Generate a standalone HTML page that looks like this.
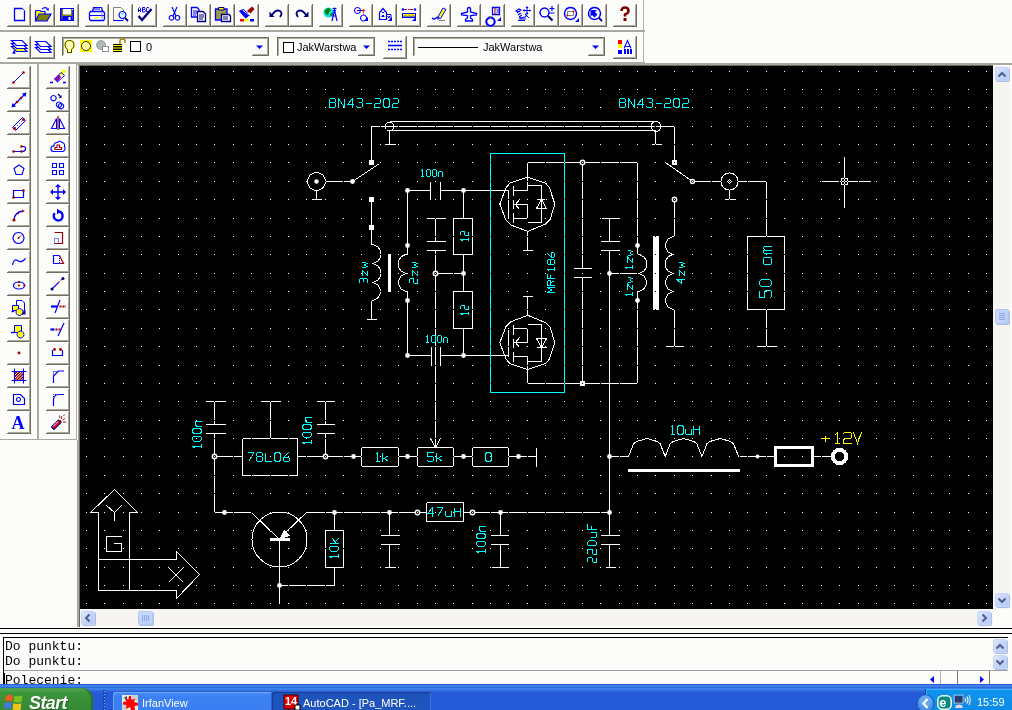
<!DOCTYPE html><html><head><meta charset="utf-8"><style>
*{margin:0;padding:0;box-sizing:border-box}
html,body{width:1012px;height:710px;overflow:hidden;background:#fcfdfb;font-family:"Liberation Sans",sans-serif;position:relative}
.a{position:absolute}
svg{position:absolute;overflow:visible}
</style></head><body><div class="a" style="left:0px;top:30px;width:645px;height:2px;background:#a9a8a3;"></div><div class="a" style="left:0px;top:62px;width:645px;height:2px;background:#a9a8a3;"></div><div class="a" style="left:643px;top:0px;width:1px;height:30px;background:#b4b3ae;"></div><div class="a" style="left:643px;top:32px;width:1px;height:30px;background:#b4b3ae;"></div><div class="a" style="left:30px;top:4px;width:1px;height:23px;background:#716f64;"></div><div class="a" style="left:7px;top:26px;width:24px;height:1px;background:#716f64;"></div><div class="a" style="left:29px;top:5px;width:1px;height:21px;background:#aca899;"></div><div class="a" style="left:8px;top:25px;width:22px;height:1px;background:#aca899;"></div><div class="a" style="left:54px;top:4px;width:1px;height:23px;background:#716f64;"></div><div class="a" style="left:31px;top:26px;width:24px;height:1px;background:#716f64;"></div><div class="a" style="left:53px;top:5px;width:1px;height:21px;background:#aca899;"></div><div class="a" style="left:32px;top:25px;width:22px;height:1px;background:#aca899;"></div><div class="a" style="left:78px;top:4px;width:1px;height:23px;background:#716f64;"></div><div class="a" style="left:55px;top:26px;width:24px;height:1px;background:#716f64;"></div><div class="a" style="left:77px;top:5px;width:1px;height:21px;background:#aca899;"></div><div class="a" style="left:56px;top:25px;width:22px;height:1px;background:#aca899;"></div><div class="a" style="left:108px;top:4px;width:1px;height:23px;background:#716f64;"></div><div class="a" style="left:85px;top:26px;width:24px;height:1px;background:#716f64;"></div><div class="a" style="left:107px;top:5px;width:1px;height:21px;background:#aca899;"></div><div class="a" style="left:86px;top:25px;width:22px;height:1px;background:#aca899;"></div><div class="a" style="left:132px;top:4px;width:1px;height:23px;background:#716f64;"></div><div class="a" style="left:109px;top:26px;width:24px;height:1px;background:#716f64;"></div><div class="a" style="left:131px;top:5px;width:1px;height:21px;background:#aca899;"></div><div class="a" style="left:110px;top:25px;width:22px;height:1px;background:#aca899;"></div><div class="a" style="left:156px;top:4px;width:1px;height:23px;background:#716f64;"></div><div class="a" style="left:133px;top:26px;width:24px;height:1px;background:#716f64;"></div><div class="a" style="left:155px;top:5px;width:1px;height:21px;background:#aca899;"></div><div class="a" style="left:134px;top:25px;width:22px;height:1px;background:#aca899;"></div><div class="a" style="left:186px;top:4px;width:1px;height:23px;background:#716f64;"></div><div class="a" style="left:163px;top:26px;width:24px;height:1px;background:#716f64;"></div><div class="a" style="left:185px;top:5px;width:1px;height:21px;background:#aca899;"></div><div class="a" style="left:164px;top:25px;width:22px;height:1px;background:#aca899;"></div><div class="a" style="left:210px;top:4px;width:1px;height:23px;background:#716f64;"></div><div class="a" style="left:187px;top:26px;width:24px;height:1px;background:#716f64;"></div><div class="a" style="left:209px;top:5px;width:1px;height:21px;background:#aca899;"></div><div class="a" style="left:188px;top:25px;width:22px;height:1px;background:#aca899;"></div><div class="a" style="left:234px;top:4px;width:1px;height:23px;background:#716f64;"></div><div class="a" style="left:211px;top:26px;width:24px;height:1px;background:#716f64;"></div><div class="a" style="left:233px;top:5px;width:1px;height:21px;background:#aca899;"></div><div class="a" style="left:212px;top:25px;width:22px;height:1px;background:#aca899;"></div><div class="a" style="left:258px;top:4px;width:1px;height:23px;background:#716f64;"></div><div class="a" style="left:235px;top:26px;width:24px;height:1px;background:#716f64;"></div><div class="a" style="left:257px;top:5px;width:1px;height:21px;background:#aca899;"></div><div class="a" style="left:236px;top:25px;width:22px;height:1px;background:#aca899;"></div><div class="a" style="left:288px;top:4px;width:1px;height:23px;background:#716f64;"></div><div class="a" style="left:265px;top:26px;width:24px;height:1px;background:#716f64;"></div><div class="a" style="left:287px;top:5px;width:1px;height:21px;background:#aca899;"></div><div class="a" style="left:266px;top:25px;width:22px;height:1px;background:#aca899;"></div><div class="a" style="left:312px;top:4px;width:1px;height:23px;background:#716f64;"></div><div class="a" style="left:289px;top:26px;width:24px;height:1px;background:#716f64;"></div><div class="a" style="left:311px;top:5px;width:1px;height:21px;background:#aca899;"></div><div class="a" style="left:290px;top:25px;width:22px;height:1px;background:#aca899;"></div><div class="a" style="left:342px;top:4px;width:1px;height:23px;background:#716f64;"></div><div class="a" style="left:319px;top:26px;width:24px;height:1px;background:#716f64;"></div><div class="a" style="left:341px;top:5px;width:1px;height:21px;background:#aca899;"></div><div class="a" style="left:320px;top:25px;width:22px;height:1px;background:#aca899;"></div><div class="a" style="left:372px;top:4px;width:1px;height:23px;background:#716f64;"></div><div class="a" style="left:349px;top:26px;width:24px;height:1px;background:#716f64;"></div><div class="a" style="left:371px;top:5px;width:1px;height:21px;background:#aca899;"></div><div class="a" style="left:350px;top:25px;width:22px;height:1px;background:#aca899;"></div><div class="a" style="left:396px;top:4px;width:1px;height:23px;background:#716f64;"></div><div class="a" style="left:373px;top:26px;width:24px;height:1px;background:#716f64;"></div><div class="a" style="left:395px;top:5px;width:1px;height:21px;background:#aca899;"></div><div class="a" style="left:374px;top:25px;width:22px;height:1px;background:#aca899;"></div><div class="a" style="left:420px;top:4px;width:1px;height:23px;background:#716f64;"></div><div class="a" style="left:397px;top:26px;width:24px;height:1px;background:#716f64;"></div><div class="a" style="left:419px;top:5px;width:1px;height:21px;background:#aca899;"></div><div class="a" style="left:398px;top:25px;width:22px;height:1px;background:#aca899;"></div><div class="a" style="left:450px;top:4px;width:1px;height:23px;background:#716f64;"></div><div class="a" style="left:427px;top:26px;width:24px;height:1px;background:#716f64;"></div><div class="a" style="left:449px;top:5px;width:1px;height:21px;background:#aca899;"></div><div class="a" style="left:428px;top:25px;width:22px;height:1px;background:#aca899;"></div><div class="a" style="left:480px;top:4px;width:1px;height:23px;background:#716f64;"></div><div class="a" style="left:457px;top:26px;width:24px;height:1px;background:#716f64;"></div><div class="a" style="left:479px;top:5px;width:1px;height:21px;background:#aca899;"></div><div class="a" style="left:458px;top:25px;width:22px;height:1px;background:#aca899;"></div><div class="a" style="left:504px;top:4px;width:1px;height:23px;background:#716f64;"></div><div class="a" style="left:481px;top:26px;width:24px;height:1px;background:#716f64;"></div><div class="a" style="left:503px;top:5px;width:1px;height:21px;background:#aca899;"></div><div class="a" style="left:482px;top:25px;width:22px;height:1px;background:#aca899;"></div><div class="a" style="left:534px;top:4px;width:1px;height:23px;background:#716f64;"></div><div class="a" style="left:511px;top:26px;width:24px;height:1px;background:#716f64;"></div><div class="a" style="left:533px;top:5px;width:1px;height:21px;background:#aca899;"></div><div class="a" style="left:512px;top:25px;width:22px;height:1px;background:#aca899;"></div><div class="a" style="left:558px;top:4px;width:1px;height:23px;background:#716f64;"></div><div class="a" style="left:535px;top:26px;width:24px;height:1px;background:#716f64;"></div><div class="a" style="left:557px;top:5px;width:1px;height:21px;background:#aca899;"></div><div class="a" style="left:536px;top:25px;width:22px;height:1px;background:#aca899;"></div><div class="a" style="left:582px;top:4px;width:1px;height:23px;background:#716f64;"></div><div class="a" style="left:559px;top:26px;width:24px;height:1px;background:#716f64;"></div><div class="a" style="left:581px;top:5px;width:1px;height:21px;background:#aca899;"></div><div class="a" style="left:560px;top:25px;width:22px;height:1px;background:#aca899;"></div><div class="a" style="left:606px;top:4px;width:1px;height:23px;background:#716f64;"></div><div class="a" style="left:583px;top:26px;width:24px;height:1px;background:#716f64;"></div><div class="a" style="left:605px;top:5px;width:1px;height:21px;background:#aca899;"></div><div class="a" style="left:584px;top:25px;width:22px;height:1px;background:#aca899;"></div><div class="a" style="left:636px;top:4px;width:1px;height:23px;background:#716f64;"></div><div class="a" style="left:613px;top:26px;width:24px;height:1px;background:#716f64;"></div><div class="a" style="left:635px;top:5px;width:1px;height:21px;background:#aca899;"></div><div class="a" style="left:614px;top:25px;width:22px;height:1px;background:#aca899;"></div><div class="a" style="left:30px;top:36px;width:1px;height:23px;background:#716f64;"></div><div class="a" style="left:7px;top:58px;width:24px;height:1px;background:#716f64;"></div><div class="a" style="left:29px;top:37px;width:1px;height:21px;background:#aca899;"></div><div class="a" style="left:8px;top:57px;width:22px;height:1px;background:#aca899;"></div><div class="a" style="left:54px;top:36px;width:1px;height:23px;background:#716f64;"></div><div class="a" style="left:31px;top:58px;width:24px;height:1px;background:#716f64;"></div><div class="a" style="left:53px;top:37px;width:1px;height:21px;background:#aca899;"></div><div class="a" style="left:32px;top:57px;width:22px;height:1px;background:#aca899;"></div><div class="a" style="left:406px;top:36px;width:1px;height:23px;background:#716f64;"></div><div class="a" style="left:383px;top:58px;width:24px;height:1px;background:#716f64;"></div><div class="a" style="left:405px;top:37px;width:1px;height:21px;background:#aca899;"></div><div class="a" style="left:384px;top:57px;width:22px;height:1px;background:#aca899;"></div><div class="a" style="left:636px;top:36px;width:1px;height:23px;background:#716f64;"></div><div class="a" style="left:613px;top:58px;width:24px;height:1px;background:#716f64;"></div><div class="a" style="left:635px;top:37px;width:1px;height:21px;background:#aca899;"></div><div class="a" style="left:614px;top:57px;width:22px;height:1px;background:#aca899;"></div><div class="a" style="left:62px;top:37px;width:207px;height:1px;background:#716f64;"></div><div class="a" style="left:62px;top:37px;width:1px;height:19px;background:#716f64;"></div><div class="a" style="left:63px;top:38px;width:205px;height:1px;background:#aca899;"></div><div class="a" style="left:63px;top:38px;width:1px;height:17px;background:#aca899;"></div><div class="a" style="left:277px;top:37px;width:98px;height:1px;background:#716f64;"></div><div class="a" style="left:277px;top:37px;width:1px;height:19px;background:#716f64;"></div><div class="a" style="left:278px;top:38px;width:96px;height:1px;background:#aca899;"></div><div class="a" style="left:278px;top:38px;width:1px;height:17px;background:#aca899;"></div><div class="a" style="left:413px;top:37px;width:192px;height:1px;background:#716f64;"></div><div class="a" style="left:413px;top:37px;width:1px;height:19px;background:#716f64;"></div><div class="a" style="left:414px;top:38px;width:190px;height:1px;background:#aca899;"></div><div class="a" style="left:414px;top:38px;width:1px;height:17px;background:#aca899;"></div><div class="a" style="left:37px;top:64px;width:2px;height:375px;background:#a9a8a3;"></div><div class="a" style="left:76px;top:64px;width:1px;height:375px;background:#a9a8a3;"></div><div class="a" style="left:77px;top:440px;width:1px;height:187px;background:#a9a8a3;"></div><div class="a" style="left:0px;top:439px;width:77px;height:1px;background:#a9a8a3;"></div><div class="a" style="left:30px;top:66px;width:1px;height:23px;background:#716f64;"></div><div class="a" style="left:7px;top:88px;width:24px;height:1px;background:#716f64;"></div><div class="a" style="left:29px;top:67px;width:1px;height:21px;background:#aca899;"></div><div class="a" style="left:8px;top:87px;width:22px;height:1px;background:#aca899;"></div><div class="a" style="left:69px;top:66px;width:1px;height:23px;background:#716f64;"></div><div class="a" style="left:46px;top:88px;width:24px;height:1px;background:#716f64;"></div><div class="a" style="left:68px;top:67px;width:1px;height:21px;background:#aca899;"></div><div class="a" style="left:47px;top:87px;width:22px;height:1px;background:#aca899;"></div><div class="a" style="left:30px;top:89px;width:1px;height:23px;background:#716f64;"></div><div class="a" style="left:7px;top:111px;width:24px;height:1px;background:#716f64;"></div><div class="a" style="left:29px;top:90px;width:1px;height:21px;background:#aca899;"></div><div class="a" style="left:8px;top:110px;width:22px;height:1px;background:#aca899;"></div><div class="a" style="left:69px;top:89px;width:1px;height:23px;background:#716f64;"></div><div class="a" style="left:46px;top:111px;width:24px;height:1px;background:#716f64;"></div><div class="a" style="left:68px;top:90px;width:1px;height:21px;background:#aca899;"></div><div class="a" style="left:47px;top:110px;width:22px;height:1px;background:#aca899;"></div><div class="a" style="left:30px;top:112px;width:1px;height:23px;background:#716f64;"></div><div class="a" style="left:7px;top:134px;width:24px;height:1px;background:#716f64;"></div><div class="a" style="left:29px;top:113px;width:1px;height:21px;background:#aca899;"></div><div class="a" style="left:8px;top:133px;width:22px;height:1px;background:#aca899;"></div><div class="a" style="left:69px;top:112px;width:1px;height:23px;background:#716f64;"></div><div class="a" style="left:46px;top:134px;width:24px;height:1px;background:#716f64;"></div><div class="a" style="left:68px;top:113px;width:1px;height:21px;background:#aca899;"></div><div class="a" style="left:47px;top:133px;width:22px;height:1px;background:#aca899;"></div><div class="a" style="left:30px;top:135px;width:1px;height:23px;background:#716f64;"></div><div class="a" style="left:7px;top:157px;width:24px;height:1px;background:#716f64;"></div><div class="a" style="left:29px;top:136px;width:1px;height:21px;background:#aca899;"></div><div class="a" style="left:8px;top:156px;width:22px;height:1px;background:#aca899;"></div><div class="a" style="left:69px;top:135px;width:1px;height:23px;background:#716f64;"></div><div class="a" style="left:46px;top:157px;width:24px;height:1px;background:#716f64;"></div><div class="a" style="left:68px;top:136px;width:1px;height:21px;background:#aca899;"></div><div class="a" style="left:47px;top:156px;width:22px;height:1px;background:#aca899;"></div><div class="a" style="left:30px;top:158px;width:1px;height:23px;background:#716f64;"></div><div class="a" style="left:7px;top:180px;width:24px;height:1px;background:#716f64;"></div><div class="a" style="left:29px;top:159px;width:1px;height:21px;background:#aca899;"></div><div class="a" style="left:8px;top:179px;width:22px;height:1px;background:#aca899;"></div><div class="a" style="left:69px;top:158px;width:1px;height:23px;background:#716f64;"></div><div class="a" style="left:46px;top:180px;width:24px;height:1px;background:#716f64;"></div><div class="a" style="left:68px;top:159px;width:1px;height:21px;background:#aca899;"></div><div class="a" style="left:47px;top:179px;width:22px;height:1px;background:#aca899;"></div><div class="a" style="left:30px;top:181px;width:1px;height:23px;background:#716f64;"></div><div class="a" style="left:7px;top:203px;width:24px;height:1px;background:#716f64;"></div><div class="a" style="left:29px;top:182px;width:1px;height:21px;background:#aca899;"></div><div class="a" style="left:8px;top:202px;width:22px;height:1px;background:#aca899;"></div><div class="a" style="left:69px;top:181px;width:1px;height:23px;background:#716f64;"></div><div class="a" style="left:46px;top:203px;width:24px;height:1px;background:#716f64;"></div><div class="a" style="left:68px;top:182px;width:1px;height:21px;background:#aca899;"></div><div class="a" style="left:47px;top:202px;width:22px;height:1px;background:#aca899;"></div><div class="a" style="left:30px;top:204px;width:1px;height:23px;background:#716f64;"></div><div class="a" style="left:7px;top:226px;width:24px;height:1px;background:#716f64;"></div><div class="a" style="left:29px;top:205px;width:1px;height:21px;background:#aca899;"></div><div class="a" style="left:8px;top:225px;width:22px;height:1px;background:#aca899;"></div><div class="a" style="left:69px;top:204px;width:1px;height:23px;background:#716f64;"></div><div class="a" style="left:46px;top:226px;width:24px;height:1px;background:#716f64;"></div><div class="a" style="left:68px;top:205px;width:1px;height:21px;background:#aca899;"></div><div class="a" style="left:47px;top:225px;width:22px;height:1px;background:#aca899;"></div><div class="a" style="left:30px;top:227px;width:1px;height:23px;background:#716f64;"></div><div class="a" style="left:7px;top:249px;width:24px;height:1px;background:#716f64;"></div><div class="a" style="left:29px;top:228px;width:1px;height:21px;background:#aca899;"></div><div class="a" style="left:8px;top:248px;width:22px;height:1px;background:#aca899;"></div><div class="a" style="left:69px;top:227px;width:1px;height:23px;background:#716f64;"></div><div class="a" style="left:46px;top:249px;width:24px;height:1px;background:#716f64;"></div><div class="a" style="left:68px;top:228px;width:1px;height:21px;background:#aca899;"></div><div class="a" style="left:47px;top:248px;width:22px;height:1px;background:#aca899;"></div><div class="a" style="left:30px;top:250px;width:1px;height:23px;background:#716f64;"></div><div class="a" style="left:7px;top:272px;width:24px;height:1px;background:#716f64;"></div><div class="a" style="left:29px;top:251px;width:1px;height:21px;background:#aca899;"></div><div class="a" style="left:8px;top:271px;width:22px;height:1px;background:#aca899;"></div><div class="a" style="left:69px;top:250px;width:1px;height:23px;background:#716f64;"></div><div class="a" style="left:46px;top:272px;width:24px;height:1px;background:#716f64;"></div><div class="a" style="left:68px;top:251px;width:1px;height:21px;background:#aca899;"></div><div class="a" style="left:47px;top:271px;width:22px;height:1px;background:#aca899;"></div><div class="a" style="left:30px;top:273px;width:1px;height:23px;background:#716f64;"></div><div class="a" style="left:7px;top:295px;width:24px;height:1px;background:#716f64;"></div><div class="a" style="left:29px;top:274px;width:1px;height:21px;background:#aca899;"></div><div class="a" style="left:8px;top:294px;width:22px;height:1px;background:#aca899;"></div><div class="a" style="left:69px;top:273px;width:1px;height:23px;background:#716f64;"></div><div class="a" style="left:46px;top:295px;width:24px;height:1px;background:#716f64;"></div><div class="a" style="left:68px;top:274px;width:1px;height:21px;background:#aca899;"></div><div class="a" style="left:47px;top:294px;width:22px;height:1px;background:#aca899;"></div><div class="a" style="left:30px;top:296px;width:1px;height:23px;background:#716f64;"></div><div class="a" style="left:7px;top:318px;width:24px;height:1px;background:#716f64;"></div><div class="a" style="left:29px;top:297px;width:1px;height:21px;background:#aca899;"></div><div class="a" style="left:8px;top:317px;width:22px;height:1px;background:#aca899;"></div><div class="a" style="left:69px;top:296px;width:1px;height:23px;background:#716f64;"></div><div class="a" style="left:46px;top:318px;width:24px;height:1px;background:#716f64;"></div><div class="a" style="left:68px;top:297px;width:1px;height:21px;background:#aca899;"></div><div class="a" style="left:47px;top:317px;width:22px;height:1px;background:#aca899;"></div><div class="a" style="left:30px;top:319px;width:1px;height:23px;background:#716f64;"></div><div class="a" style="left:7px;top:341px;width:24px;height:1px;background:#716f64;"></div><div class="a" style="left:29px;top:320px;width:1px;height:21px;background:#aca899;"></div><div class="a" style="left:8px;top:340px;width:22px;height:1px;background:#aca899;"></div><div class="a" style="left:69px;top:319px;width:1px;height:23px;background:#716f64;"></div><div class="a" style="left:46px;top:341px;width:24px;height:1px;background:#716f64;"></div><div class="a" style="left:68px;top:320px;width:1px;height:21px;background:#aca899;"></div><div class="a" style="left:47px;top:340px;width:22px;height:1px;background:#aca899;"></div><div class="a" style="left:30px;top:342px;width:1px;height:23px;background:#716f64;"></div><div class="a" style="left:7px;top:364px;width:24px;height:1px;background:#716f64;"></div><div class="a" style="left:29px;top:343px;width:1px;height:21px;background:#aca899;"></div><div class="a" style="left:8px;top:363px;width:22px;height:1px;background:#aca899;"></div><div class="a" style="left:69px;top:342px;width:1px;height:23px;background:#716f64;"></div><div class="a" style="left:46px;top:364px;width:24px;height:1px;background:#716f64;"></div><div class="a" style="left:68px;top:343px;width:1px;height:21px;background:#aca899;"></div><div class="a" style="left:47px;top:363px;width:22px;height:1px;background:#aca899;"></div><div class="a" style="left:30px;top:365px;width:1px;height:23px;background:#716f64;"></div><div class="a" style="left:7px;top:387px;width:24px;height:1px;background:#716f64;"></div><div class="a" style="left:29px;top:366px;width:1px;height:21px;background:#aca899;"></div><div class="a" style="left:8px;top:386px;width:22px;height:1px;background:#aca899;"></div><div class="a" style="left:69px;top:365px;width:1px;height:23px;background:#716f64;"></div><div class="a" style="left:46px;top:387px;width:24px;height:1px;background:#716f64;"></div><div class="a" style="left:68px;top:366px;width:1px;height:21px;background:#aca899;"></div><div class="a" style="left:47px;top:386px;width:22px;height:1px;background:#aca899;"></div><div class="a" style="left:30px;top:388px;width:1px;height:23px;background:#716f64;"></div><div class="a" style="left:7px;top:410px;width:24px;height:1px;background:#716f64;"></div><div class="a" style="left:29px;top:389px;width:1px;height:21px;background:#aca899;"></div><div class="a" style="left:8px;top:409px;width:22px;height:1px;background:#aca899;"></div><div class="a" style="left:69px;top:388px;width:1px;height:23px;background:#716f64;"></div><div class="a" style="left:46px;top:410px;width:24px;height:1px;background:#716f64;"></div><div class="a" style="left:68px;top:389px;width:1px;height:21px;background:#aca899;"></div><div class="a" style="left:47px;top:409px;width:22px;height:1px;background:#aca899;"></div><div class="a" style="left:30px;top:411px;width:1px;height:23px;background:#716f64;"></div><div class="a" style="left:7px;top:433px;width:24px;height:1px;background:#716f64;"></div><div class="a" style="left:29px;top:412px;width:1px;height:21px;background:#aca899;"></div><div class="a" style="left:8px;top:432px;width:22px;height:1px;background:#aca899;"></div><div class="a" style="left:69px;top:411px;width:1px;height:23px;background:#716f64;"></div><div class="a" style="left:46px;top:433px;width:24px;height:1px;background:#716f64;"></div><div class="a" style="left:68px;top:412px;width:1px;height:21px;background:#aca899;"></div><div class="a" style="left:47px;top:432px;width:22px;height:1px;background:#aca899;"></div><svg class="a" style="left:11px;top:6px" width="16" height="16" viewBox="0 0 16 16"><path d="M3.5 2.5H11L13.5 5V14.5H3.5Z" stroke="#0000ff" stroke-width="1.3" fill="none" /><path d="M11 2.5V5H13.5" fill="#fff"/></svg><svg class="a" style="left:35px;top:6px" width="16" height="16" viewBox="0 0 16 16"><path d="M0.5 4.5H5L6 5.5H10V8H4L0.5 15Z" fill="#ffff00"/><path d="M0.5 4.5H5L6 5.5H10V8" stroke="#0000ff" stroke-width="1.2" fill="none" /><path d="M0.5 4.5V15" stroke="#0000ff" stroke-width="1.2" fill="none" /><path d="M0.5 15L4 8H16L12 15Z" fill="#808000"/><path d="M0.5 15L4 8H16L12 15Z" stroke="#0000ff" stroke-width="1.2" fill="none" /><path d="M7 3Q9.5 0.5 12.5 2.5" stroke="#0000ff" stroke-width="1.2" fill="none" /><path d="M11 3.5L14 2L13.5 5Z" fill="#0000ff"/></svg><svg class="a" style="left:59px;top:6px" width="16" height="16" viewBox="0 0 16 16"><path d="M1 2H15V15H1Z" fill="#0000ff"/><path d="M2.5 3H13.5V13.5H2.5Z" fill="#808000"/><path d="M4 3H12V8.5H4Z" fill="#fff"/><path d="M3.5 10H13V15H3.5Z" fill="#0000ff"/><path d="M9.5 11H11.5V14H9.5Z" fill="#fff"/><path d="M13 3H14V4H13Z" fill="#fff"/></svg><svg class="a" style="left:89px;top:6px" width="16" height="16" viewBox="0 0 16 16"><path d="M4.5 1.5H12.5L13.5 5.5H3.5Z" stroke="#0000ff" stroke-width="1.2" fill="none" /><path d="M5 3H11" stroke="#0000ff" stroke-width="1" fill="none" /><path d="M0.5 6H15.5V14H1.5Z" fill="#fff"/><path d="M1.5 5.5H14.5L15.5 7V13L14.5 14.5H1.5L0.5 13V7Z" stroke="#0000ff" stroke-width="1.3" fill="none" /><path d="M1 9.5H15" stroke="#0000ff" stroke-width="1" fill="none" /><path d="M6 11H10V12.5H6Z" fill="#ffff00"/><path d="M13 7V13" stroke="#8080ff" stroke-width="1" fill="none" /></svg><svg class="a" style="left:113px;top:6px" width="16" height="16" viewBox="0 0 16 16"><path d="M0.5 1.5H8L10.5 4V14.5H0.5Z" stroke="#808080" stroke-width="1" fill="none" /><path d="M0.5 14.5H10" stroke="#0000ff" stroke-width="1.2" fill="none" /><path d="M9.5 5.5A3.5 3.5 0 1 1 9.49 5.5Z" fill="#e0ffff"/><path d="M9.5 5.5A3.5 3.5 0 1 1 9.49 5.5Z" stroke="#0000ff" stroke-width="1.2" fill="none" /><path d="M9 8.5Q9.5 7.5 10.5 7.5" stroke="#00c0ff" stroke-width="1.2" fill="none" /><path d="M12 12L15 15" stroke="#000080" stroke-width="2" fill="none" /></svg><svg class="a" style="left:137px;top:6px" width="16" height="16" viewBox="0 0 16 16"><path d="M1.5 6V2.5L2.5 1.5L3.5 2.5V6M1.5 4.5H3.5" stroke="#0000ff" stroke-width="1" fill="none" /><path d="M5.5 6V1.5H7.5L8 2.5L7.5 3.5H5.5M7.5 3.5L8.5 4.5L7.5 6H5.5" stroke="#0000ff" stroke-width="1" fill="none" /><path d="M12 2L11 1.5H10L9.5 2.5V5L10 6H11.5" stroke="#0000ff" stroke-width="1" fill="none" /><path d="M1.5 10L5 14L14.5 3" stroke="#000080" stroke-width="2.4" fill="none" /></svg><svg class="a" style="left:167px;top:6px" width="16" height="16" viewBox="0 0 16 16"><path d="M5 1L9 10M10 1L6 10" stroke="#0000ff" stroke-width="1.2" fill="none" /><path d="M4.5 9.5A2.3 2.3 0 1 1 4.49 9.5Z" fill="#fff"/><path d="M4.5 9.5A2.3 2.3 0 1 1 4.49 9.5Z" stroke="#0000ff" stroke-width="1.2" fill="none" /><path d="M10.5 9.5A2.3 2.3 0 1 1 10.49 9.5Z" stroke="#0000ff" stroke-width="1.2" fill="none" /></svg><svg class="a" style="left:191px;top:6px" width="16" height="16" viewBox="0 0 16 16"><path d="M0.5 1.5H6L8 3.5V11H0.5Z" fill="#fff"/><path d="M0.5 1.5H6L8 3.5V11H0.5Z" stroke="#0000ff" stroke-width="1.3" fill="none" /><path d="M2 5H6M2 7H6M2 9H5" stroke="#0000ff" stroke-width="1" fill="none" /><path d="M6.5 5.5H12L14.5 8V15.5H6.5Z" fill="#fff"/><path d="M6.5 5.5H12L14.5 8V15.5H6.5Z" stroke="#000080" stroke-width="1.3" fill="none" /><path d="M8 9H13M8 11H13M8 13H12" stroke="#000080" stroke-width="1" fill="none" /></svg><svg class="a" style="left:215px;top:6px" width="16" height="16" viewBox="0 0 16 16"><path d="M0.5 3H12V14H0.5Z" fill="#9c9c50"/><path d="M0.5 3H12V14H0.5Z" stroke="#0000ff" stroke-width="1.3" fill="none" /><path d="M3.5 1.5H9V4H3.5Z" fill="#ffff00"/><path d="M3.5 1.5H9V4H3.5Z" stroke="#000080" stroke-width="1" fill="none" /><path d="M6.5 8.5H14L15.5 10V15.5H6.5Z" fill="#fff"/><path d="M6.5 8.5H14L15.5 10V15.5H6.5Z" stroke="#000080" stroke-width="1.3" fill="none" /><path d="M8 11H13M8 13H13" stroke="#000080" stroke-width="1" fill="none" /></svg><svg class="a" style="left:239px;top:6px" width="16" height="16" viewBox="0 0 16 16"><path d="M0.5 5L4.5 3.5L10 9.5L6.5 12Z" fill="#0000ff"/><path d="M3.5 4.5L9.5 9L10.5 8L5 3.5Z" fill="#fff"/><path d="M0.5 5L4.5 3.5L10.5 9L6.5 12Z" stroke="#0000ff" stroke-width="1" fill="none" /><path d="M8 5L13 0.5L15.5 3L11 8Z" fill="#a00000"/><path d="M10 6L11.5 7.5L10 9L8.5 7.5Z" fill="#fff"/><path d="M1 13H5V15.5H1Z" fill="#ff0000"/><path d="M6 13H10V15.5H6Z" fill="#ffff00"/><path d="M11 13H15V15.5H11Z" fill="#0000ff"/></svg><svg class="a" style="left:269px;top:6px" width="16" height="16" viewBox="0 0 16 16"><path d="M3 9Q7 3 11 5Q14 7 11 11" stroke="#000080" stroke-width="1.8" fill="none" /><path d="M0.5 5.5L0.5 11L5.5 11Z" fill="#000080"/></svg><svg class="a" style="left:293px;top:6px" width="16" height="16" viewBox="0 0 16 16"><path d="M13 9Q9 3 5 5Q2 7 5 11" stroke="#000080" stroke-width="1.8" fill="none" /><path d="M15.5 5.5L15.5 11L10.5 11Z" fill="#000080"/></svg><svg class="a" style="left:323px;top:6px" width="16" height="16" viewBox="0 0 16 16"><path d="M5.5 1.5A5 5 0 1 1 5.49 1.5Z" fill="#00e0e0"/><path d="M1.5 5Q3 2 6 2L8 4L6 6L5 9L2.5 8Z" fill="#008000"/><path d="M7 8L10 6.5L10 9L8 11Z" fill="#008000"/><path d="M11.5 1.5V4M9.5 2.5H13.5M10 4.5H13M9 15L11.5 4L14 15M10 10H13" stroke="#0000ff" stroke-width="1.2" fill="none" /></svg><svg class="a" style="left:353px;top:6px" width="16" height="16" viewBox="0 0 16 16"><path d="M4.5 1.5A3 3 0 1 1 4.49 1.5Z" stroke="#0000ff" stroke-width="1.1" fill="none" /><path d="M4.5 4.5H10" stroke="#0000ff" stroke-width="1" fill="none" /><circle cx="10.5" cy="4.5" r="1.2" fill="#e00000"/><path d="M10.5 5.5V9" stroke="#e00000" stroke-width="1" fill="none" stroke-dasharray="1 1"/><path d="M10.5 9A3 3 0 1 1 10.49 9Z" stroke="#0000ff" stroke-width="1.1" fill="none" /><circle cx="4.5" cy="4.5" r="0.8" fill="#e00000"/><path d="M11 15L15 15L15 11Z" fill="#0000ff"/></svg><svg class="a" style="left:377px;top:6px" width="16" height="16" viewBox="0 0 16 16"><path d="M2.5 6.5L6 2.5L9.5 6.5V13.5H2.5Z" stroke="#0000ff" stroke-width="1.2" fill="none" /><path d="M4.5 5.5L6 7L7.5 5.5" stroke="#0000ff" stroke-width="1" fill="none" /><path d="M5 9H7V11H5Z" fill="#0000ff"/><path d="M4 10H8V10.5H4Z" fill="#0000ff"/><path d="M9.5 8.5H14V14" stroke="#0000ff" stroke-width="1" fill="none" /><path d="M10.5 10L13 12.5M13 10L10.5 12.5" stroke="#0000ff" stroke-width="1" fill="none" /><path d="M11 15L15 15L15 11Z" fill="#0000ff"/></svg><svg class="a" style="left:401px;top:6px" width="16" height="16" viewBox="0 0 16 16"><path d="M1 3.5H15" stroke="#0000ff" stroke-width="1.2" fill="none" stroke-dasharray="1.5 1.5"/><circle cx="2" cy="3.5" r="1.3" fill="#0000ff"/><circle cx="14" cy="3.5" r="1.3" fill="#0000ff"/><path d="M3 3.5H13" stroke="#e00000" stroke-width="1" fill="none" stroke-dasharray="1 1"/><path d="M1 7H15V12H1Z" fill="#0000ff"/><path d="M2 8H14V10.5H2Z" fill="#ffff00"/><path d="M2 10L4 8.5L6 10L8 8.5L10 10L12 8.5L14 10Z" fill="#c0a000"/><path d="M11 15L15 15L15 11Z" fill="#0000ff"/></svg><svg class="a" style="left:431px;top:6px" width="16" height="16" viewBox="0 0 16 16"><path d="M7 11L12 2L15 3.5L9.5 12.5Z" fill="#ffff00"/><path d="M7 11L12 2L15 3.5L9.5 12.5Z" stroke="#0000ff" stroke-width="1" fill="none" /><path d="M1 12Q3 14 5 12Q7 10 7 13L8.5 12.5" stroke="#0000ff" stroke-width="1.2" fill="none" /><path d="M8 14.5H14" stroke="#808080" stroke-width="1" fill="none" /></svg><svg class="a" style="left:461px;top:6px" width="16" height="16" viewBox="0 0 16 16"><path d="M6.5 2.5Q8 0.5 9.5 2.5V6L15.5 7.5V9L9.5 9.5V12L11.5 13.5V15H4.5V13.5L6.5 12V9.5L0.5 9V7.5L6.5 6Z" stroke="#0000ff" stroke-width="1.3" fill="none" /></svg><svg class="a" style="left:485px;top:6px" width="16" height="16" viewBox="0 0 16 16"><path d="M5.5 11A5 5 0 1 1 5.49 11Z" fill="#fff"/><path d="M5.5 11.5A4.2 4.2 0 1 1 5.49 11.5Z" stroke="#0000ff" stroke-width="2" fill="none" /><path d="M3.5 10.5H7.5M5.5 10.5V13" stroke="#808080" stroke-width="1.2" fill="none" /><path d="M7 1H15V9H7Z" fill="#fff"/><path d="M7.5 1.5H14.5V8.5H7.5Z" stroke="#0000ff" stroke-width="1.3" fill="none" /><path d="M9 3H11.5M9 5H11.5M9 7H11.5" stroke="#a00000" stroke-width="1.2" fill="none" /><path d="M13 3V7" stroke="#0000ff" stroke-width="1" fill="none" /><path d="M12 15L16 15L16 11Z" fill="#0000ff"/></svg><svg class="a" style="left:515px;top:6px" width="16" height="16" viewBox="0 0 16 16"><path d="M1 5L4 3L6 4L3 6ZM2 7L5 5M3 9L6 7M4 11L7 9M4 13H11M3 14.5H10M4 11L6 12L10 11L12 9" stroke="#0000ff" stroke-width="1.1" fill="none" /><path d="M12 1V8M8.5 4.5H15.5" stroke="#0000ff" stroke-width="1.1" fill="none" /><path d="M10.5 2L12 0L13.5 2ZM10.5 7L12 9L13.5 7ZM9.5 3L7.5 4.5L9.5 6ZM14.5 3L16 4.5L14.5 6Z" fill="#0000ff"/><path d="M10 8L14 12" stroke="#0000ff" stroke-width="1" fill="none" /></svg><svg class="a" style="left:539px;top:6px" width="16" height="16" viewBox="0 0 16 16"><path d="M5.5 2A4.5 4.5 0 1 1 5.49 2Z" stroke="#0000ff" stroke-width="1.4" fill="none" /><path d="M9 10L13.5 14.5" stroke="#000080" stroke-width="2.2" fill="none" /><path d="M10.5 2.5H15.5M13 0V5M10.5 7H15.5" stroke="#0000ff" stroke-width="1.2" fill="none" /></svg><svg class="a" style="left:563px;top:6px" width="16" height="16" viewBox="0 0 16 16"><path d="M7.5 1.5A6 6 0 1 1 7.49 1.5Z" stroke="#0000ff" stroke-width="1.3" fill="none" /><path d="M4.5 5.5H10.5V9.5H4.5Z" stroke="#808080" stroke-width="1" fill="none" /><circle cx="4.5" cy="9.5" r="1" fill="#e00000"/><circle cx="10.5" cy="5.5" r="1" fill="#e00000"/><path d="M12 16L16 16L16 12Z" fill="#0000ff"/></svg><svg class="a" style="left:587px;top:6px" width="16" height="16" viewBox="0 0 16 16"><path d="M7.5 1.5A6 6 0 1 1 7.49 1.5Z" stroke="#0000ff" stroke-width="1.3" fill="none" /><path d="M3.5 4L10 4L8 6L10.5 8.5L7.5 11.5L5 9L3.5 11Z" fill="#0000ff"/><path d="M12 12L15 15" stroke="#000080" stroke-width="2" fill="none" /></svg><svg class="a" style="left:617px;top:6px" width="16" height="16" viewBox="0 0 16 16"><path d="M4.5 5Q4.5 1.5 8 1.5Q11.5 1.5 11.5 5Q11.5 7 8 8.5V10.5" stroke="#800000" stroke-width="2.6" fill="none" /><path d="M6.5 12H9.5V15H6.5Z" fill="#800000"/></svg><svg class="a" style="left:11px;top:38px" width="16" height="16" viewBox="0 0 16 16"><path d="M0.5 8.5H11L16 13.5H5.5Z" fill="#ffff00"/><path d="M0.5 8.5H11L16 13.5H5.5Z" stroke="#0000ff" stroke-width="1.2" fill="none" /><path d="M0.5 5.5H11L16 10.5H5.5Z" fill="#ffffff"/><path d="M0.5 5.5H11L16 10.5H5.5Z" stroke="#0000ff" stroke-width="1.2" fill="none" /><path d="M0.5 2.5H11L16 7.5H5.5Z" fill="#ffffff"/><path d="M0.5 2.5H11L16 7.5H5.5Z" stroke="#0000ff" stroke-width="1.2" fill="none" /><path d="M1 15.5L3.5 11.5L4.5 16Z" fill="#0000ff"/></svg><svg class="a" style="left:35px;top:38px" width="16" height="16" viewBox="0 0 16 16"><path d="M0.5 9.5H11L16 14.5H5.5Z" fill="#ffffff"/><path d="M0.5 9.5H11L16 14.5H5.5Z" stroke="#0000ff" stroke-width="1.2" fill="none" /><path d="M0.5 6.5H11L16 11.5H5.5Z" fill="#ffffff"/><path d="M0.5 6.5H11L16 11.5H5.5Z" stroke="#0000ff" stroke-width="1.2" fill="none" /><path d="M0.5 3.5H11L16 8.5H5.5Z" fill="#ffffff"/><path d="M0.5 3.5H11L16 8.5H5.5Z" stroke="#0000ff" stroke-width="1.2" fill="none" /></svg><svg class="a" style="left:387px;top:38px" width="16" height="16" viewBox="0 0 16 16"><path d="M1 3.5H15" stroke="#0000ff" stroke-width="1.6" fill="none" stroke-dasharray="2 1"/><path d="M1 7.5H15" stroke="#0000ff" stroke-width="1.6" fill="none" /><path d="M1 11.5H15" stroke="#0000ff" stroke-width="1.6" fill="none" stroke-dasharray="2 1"/></svg><svg class="a" style="left:617px;top:38px" width="16" height="16" viewBox="0 0 16 16"><path d="M1 2H5V6H1Z" fill="#ff0000"/><path d="M1 6H5V10H1Z" fill="#ffff00"/><path d="M1 12H5V16H1Z" fill="#0000ff"/><path d="M7 10.5L10.5 2.5L14 10.5M8 8.5H13" stroke="#0000ff" stroke-width="1.1" fill="none" /><path d="M7 11H9V16H7ZM10 11H12V16H10ZM13 11H15V16H13Z" fill="#0000ff"/></svg><svg class="a" style="left:11px;top:69px" width="16" height="16" viewBox="0 0 16 16"><path d="M2.5 13.5L12.5 3.5" stroke="#0000ff" stroke-width="1" fill="none" /><circle cx="2.5" cy="13.5" r="1.3" fill="#a00000"/><circle cx="12.5" cy="3.5" r="1.3" fill="#a00000"/></svg><svg class="a" style="left:50px;top:69px" width="16" height="16" viewBox="0 0 16 16"><path d="M4.5 10L11 3L14 6L7.5 13Z" fill="#fff"/><path d="M9 5L14 0L16 2.5L11 7Z" fill="#ffff00"/><path d="M4.5 10L9 5.5L11 8L7.5 13Z" fill="#a000a0"/><path d="M4.5 10L11 3.5L14.5 6.5L7.5 13Z" stroke="#0000ff" stroke-width="1" fill="none" /><path d="M0 13.5H3M13 13.5H16" stroke="#0000ff" stroke-width="1.6" fill="none" /></svg><svg class="a" style="left:11px;top:92px" width="16" height="16" viewBox="0 0 16 16"><path d="M1.5 14.5L14.5 1.5" stroke="#0000ff" stroke-width="1.2" fill="none" /><path d="M0.5 15.5L1.5 11L5 14.5Z" fill="#0000ff"/><path d="M15.5 0.5L11 1.5L14.5 5Z" fill="#0000ff"/><circle cx="6" cy="10" r="1.3" fill="#a00000"/><circle cx="10" cy="6" r="1.3" fill="#a00000"/></svg><svg class="a" style="left:50px;top:92px" width="16" height="16" viewBox="0 0 16 16"><path d="M3.5 3.5A2.7 2.7 0 1 1 3.49 3.5Z" stroke="#0000ff" stroke-width="1.1" fill="none" /><path d="M9 10A2.7 2.7 0 1 1 8.99 10Z" stroke="#0000ff" stroke-width="1.1" fill="none" /><path d="M11 11.5A2.7 2.7 0 1 1 10.99 11.5Z" stroke="#0000ff" stroke-width="1.1" fill="none" /><path d="M8 2L10.5 4.5" stroke="#000080" stroke-width="1.2" fill="none" /><path d="M11.5 3L11.5 6L8.5 6Z" fill="#000080"/></svg><svg class="a" style="left:11px;top:115px" width="16" height="16" viewBox="0 0 16 16"><path d="M1.5 12.5L11.5 2.5M4.5 15.5L14.5 5.5M1.5 12.5L4.5 15.5M11.5 2.5L14.5 5.5" stroke="#0000ff" stroke-width="1" fill="none" /><path d="M4 13L12 5" stroke="#0000ff" stroke-width="1" fill="none" stroke-dasharray="1 2"/><circle cx="3.5" cy="13.5" r="1.5" fill="#a00000"/><circle cx="12.5" cy="4.5" r="1.5" fill="#a00000"/></svg><svg class="a" style="left:50px;top:115px" width="16" height="16" viewBox="0 0 16 16"><path d="M6.5 3.5L1.5 13.5H6.5ZM9.5 3.5L14.5 13.5H9.5Z" stroke="#0000ff" stroke-width="1.1" fill="none" /><path d="M8 1V15" stroke="#a00000" stroke-width="1.2" fill="none" /></svg><svg class="a" style="left:11px;top:138px" width="16" height="16" viewBox="0 0 16 16"><path d="M2.5 13.5H10.5M10.5 8.5H13Q15 9 14.5 11.5Q14 13.5 10.5 13.5" stroke="#0000ff" stroke-width="1.2" fill="none" /><circle cx="2.5" cy="13.5" r="1.3" fill="#a00000"/><circle cx="10.5" cy="13.5" r="1.3" fill="#a00000"/><circle cx="10.5" cy="8.5" r="1.3" fill="#a00000"/></svg><svg class="a" style="left:50px;top:138px" width="16" height="16" viewBox="0 0 16 16"><path d="M3 13.5Q0.5 13 1 10Q1.5 7.5 4 8Q4 4 7.5 4.5Q9.5 2 12 4.5Q15 5 14.5 8.5Q16 12 13 13.5Z" stroke="#0000ff" stroke-width="1.1" fill="none" /><path d="M5 11.5H11.5V9.5H9.5V7H7V9.5H5Z" stroke="#a00000" stroke-width="1.1" fill="none" /></svg><svg class="a" style="left:11px;top:161px" width="16" height="16" viewBox="0 0 16 16"><path d="M8 4L13 7.5L11 13.5H5L3 7.5Z" stroke="#0000ff" stroke-width="1.1" fill="none" /></svg><svg class="a" style="left:50px;top:161px" width="16" height="16" viewBox="0 0 16 16"><path d="M2.5 2.5H6.5V6.5H2.5ZM9.5 2.5H13.5V6.5H9.5ZM2.5 9.5H6.5V13.5H2.5ZM9.5 9.5H13.5V13.5H9.5Z" stroke="#0000ff" stroke-width="1.1" fill="none" /></svg><svg class="a" style="left:11px;top:184px" width="16" height="16" viewBox="0 0 16 16"><path d="M2.5 6.5H12.5V13.5H2.5Z" stroke="#0000ff" stroke-width="1.2" fill="none" /><circle cx="2.5" cy="13.5" r="1.3" fill="#a00000"/><circle cx="12.5" cy="6.5" r="1.3" fill="#a00000"/></svg><svg class="a" style="left:50px;top:184px" width="16" height="16" viewBox="0 0 16 16"><path d="M8 1V15M1 8H15" stroke="#0000ff" stroke-width="1.4" fill="none" /><path d="M8 0L5 3H11ZM8 16L5 13H11ZM0 8L3 5V11ZM16 8L13 5V11Z" fill="#0000ff"/></svg><svg class="a" style="left:11px;top:207px" width="16" height="16" viewBox="0 0 16 16"><path d="M3 13Q3.5 5 12 4" stroke="#0000ff" stroke-width="1.3" fill="none" /><circle cx="3" cy="13" r="1.6" fill="#a00000"/><circle cx="7" cy="6.5" r="1" fill="#a00000"/><path d="M11 2.5L14 4L11 5.5Z" fill="#a00000"/></svg><svg class="a" style="left:50px;top:207px" width="16" height="16" viewBox="0 0 16 16"><path d="M4.5 6Q3 9 4.5 11.5Q7 14.5 10.5 13Q13 11.5 12.5 8Q12 5 9 4.5" stroke="#0000ff" stroke-width="2.3" fill="none" /><path d="M7 1.5L10.5 4.5L7 7.5Z" fill="#0000ff"/></svg><svg class="a" style="left:11px;top:230px" width="16" height="16" viewBox="0 0 16 16"><path d="M7.5 2.5A5.5 5.5 0 1 1 7.49 2.5Z" stroke="#0000ff" stroke-width="1.2" fill="none" /><path d="M7.5 8L10 5.5" stroke="#a00000" stroke-width="1" fill="none" /><circle cx="7.5" cy="8" r="1" fill="#a00000"/></svg><svg class="a" style="left:50px;top:230px" width="16" height="16" viewBox="0 0 16 16"><path d="M4.5 2.5H12.5V13.5H4.5" stroke="#a00000" stroke-width="1.2" fill="none" /><path d="M4.5 8.5H8.5V13.5" stroke="#0000ff" stroke-width="1" fill="none" stroke-dasharray="1 1"/><path d="M4.5 13.5V9" stroke="#0000ff" stroke-width="1" fill="none" stroke-dasharray="1 1"/></svg><svg class="a" style="left:11px;top:253px" width="16" height="16" viewBox="0 0 16 16"><path d="M1.5 12Q3 5 6.5 7.5Q10 10 13 7Q14 6 14.5 5" stroke="#0000ff" stroke-width="1.2" fill="none" /></svg><svg class="a" style="left:50px;top:253px" width="16" height="16" viewBox="0 0 16 16"><path d="M9.5 2.5H3.5V10.5H9.5" stroke="#0000ff" stroke-width="1.2" fill="none" /><path d="M9.5 2.5L13.5 10.5H9.5" stroke="#a00000" stroke-width="1.2" fill="none" /><path d="M9.5 3V10" stroke="#0000ff" stroke-width="1" fill="none" stroke-dasharray="1 1"/></svg><svg class="a" style="left:11px;top:276px" width="16" height="16" viewBox="0 0 16 16"><path d="M2.5 9.5A5.5 3.5 0 1 1 13.5 9.5A5.5 3.5 0 1 1 2.5 9.5Z" stroke="#0000ff" stroke-width="1.2" fill="none" /><circle cx="8" cy="9.5" r="1.1" fill="#a00000"/><circle cx="8" cy="6" r="1.1" fill="#a00000"/><circle cx="13.5" cy="9.5" r="1.1" fill="#a00000"/></svg><svg class="a" style="left:50px;top:276px" width="16" height="16" viewBox="0 0 16 16"><path d="M2 13L8.5 6.5" stroke="#0000ff" stroke-width="1.1" fill="none" /><path d="M8.5 6.5L13 2" stroke="#a00000" stroke-width="1.1" fill="none" stroke-dasharray="1.5 1.5"/><circle cx="2" cy="13" r="1.5" fill="#000080"/><circle cx="13" cy="2.5" r="1.5" fill="#000080"/></svg><svg class="a" style="left:11px;top:299px" width="16" height="16" viewBox="0 0 16 16"><path d="M5.5 1.5H11L13.5 4V12H5.5Z" fill="#fff"/><path d="M5.5 1.5H11L13.5 4V12H5.5Z" stroke="#0000ff" stroke-width="1" fill="none" /><path d="M1.5 6.5H7.5V11.5H1.5Z" fill="#ffff00"/><path d="M1.5 6.5H7.5V11.5H1.5Z" stroke="#0000ff" stroke-width="1" fill="none" /><path d="M8.5 9.5A3.5 3.5 0 1 1 8.49 9.5Z" fill="#ffff00"/><path d="M8.5 9.5A3.5 3.5 0 1 1 8.49 9.5Z" stroke="#0000ff" stroke-width="1" fill="none" /><path d="M0.5 12.5H3" stroke="#0000ff" stroke-width="1.4" fill="none" /><path d="M10 15.5L14.5 11V15.5Z" fill="#000080"/></svg><svg class="a" style="left:50px;top:299px" width="16" height="16" viewBox="0 0 16 16"><path d="M5 14L10 1" stroke="#0000ff" stroke-width="1.2" fill="none" /><path d="M1 7.5H7.5" stroke="#0000ff" stroke-width="2.2" fill="none" /><path d="M9.5 7.5H16" stroke="#a00000" stroke-width="2" fill="none" stroke-dasharray="2 1"/></svg><svg class="a" style="left:11px;top:322px" width="16" height="16" viewBox="0 0 16 16"><path d="M3.5 3.5H10.5V10.5H3.5Z" fill="#ffff00"/><path d="M3.5 3.5H10.5V10.5H3.5Z" stroke="#0000ff" stroke-width="1" fill="none" /><path d="M9.5 9A3.5 3.5 0 1 1 9.49 9Z" fill="#ffff00"/><path d="M9.5 9A3.5 3.5 0 1 1 9.49 9Z" stroke="#0000ff" stroke-width="1" fill="none" /><path d="M1 10.5H4" stroke="#0000ff" stroke-width="1.4" fill="none" /><path d="M1 9L0 10.5L1 12Z" fill="#0000ff"/></svg><svg class="a" style="left:50px;top:322px" width="16" height="16" viewBox="0 0 16 16"><path d="M8 14L14 1" stroke="#0000ff" stroke-width="1.2" fill="none" /><path d="M0.5 7.5H4.5" stroke="#0000ff" stroke-width="2.2" fill="none" /><path d="M5.5 7.5H11" stroke="#a00000" stroke-width="2" fill="none" stroke-dasharray="2 1"/></svg><svg class="a" style="left:11px;top:345px" width="16" height="16" viewBox="0 0 16 16"><circle cx="8" cy="8" r="1.4" fill="#a00000"/></svg><svg class="a" style="left:50px;top:345px" width="16" height="16" viewBox="0 0 16 16"><path d="M2.5 5V10.5H12.5V5" stroke="#0000ff" stroke-width="1.2" fill="none" /><circle cx="4.5" cy="4.5" r="1.4" fill="#a00000"/><circle cx="10.5" cy="4.5" r="1.4" fill="#a00000"/></svg><svg class="a" style="left:11px;top:368px" width="16" height="16" viewBox="0 0 16 16"><path d="M3.5 3.5H12.5V12.5H3.5Z" fill="#a00000"/><path d="M4 7L7 4M4 10L10 4M4 12.5L12.5 4M7 12.5L12.5 7M10 12.5L12.5 10" stroke="#fff" stroke-width="0.9" fill="none" /><path d="M0.5 3.5H15.5M0.5 12.5H15.5M3.5 0.5V15.5M12.5 0.5V15.5" stroke="#0000ff" stroke-width="1" fill="none" /></svg><svg class="a" style="left:50px;top:368px" width="16" height="16" viewBox="0 0 16 16"><path d="M3.5 15V8L8.5 3H14" stroke="#0000ff" stroke-width="1.2" fill="none" /><path d="M3.5 7.5V3.5H8" stroke="#0000ff" stroke-width="1" fill="none" stroke-dasharray="1 1"/></svg><svg class="a" style="left:11px;top:391px" width="16" height="16" viewBox="0 0 16 16"><path d="M2.5 3.5H9.5L13.5 7.5V13.5H2.5Z" stroke="#0000ff" stroke-width="1.2" fill="none" /><path d="M7.5 6.5A2 2 0 1 1 7.49 6.5Z" stroke="#0000ff" stroke-width="1.1" fill="none" /></svg><svg class="a" style="left:50px;top:391px" width="16" height="16" viewBox="0 0 16 16"><path d="M3.5 15V9Q3.5 3.5 9 3.5H14" stroke="#0000ff" stroke-width="1.2" fill="none" /><path d="M3.5 8V3.5H8.5" stroke="#0000ff" stroke-width="1" fill="none" stroke-dasharray="1 1"/></svg><svg class="a" style="left:11px;top:414px" width="16" height="16" viewBox="0 0 16 16"><text x="0.5" y="15" font-family="Liberation Serif" font-weight="bold" font-size="18" fill="#0000ff">A</text></svg><svg class="a" style="left:50px;top:414px" width="16" height="16" viewBox="0 0 16 16"><path d="M1.5 13L8.5 6L11 8.5L4 15.5Z" fill="#ff0000"/><path d="M1.5 13L8.5 6L11 8.5L4 15.5Z" stroke="#000080" stroke-width="1.1" fill="none" /><path d="M3 12.5L8.5 7" stroke="#fff" stroke-width="1" fill="none" /><circle cx="10" cy="7.5" r="1.5" fill="#a00000"/><path d="M11 5L12 2M12.5 6L15 4.5M13 8H16M10 4L9.5 1.5M13.5 2L14.5 0.5" stroke="#a00000" stroke-width="0.9" fill="none" /></svg><svg class="a" style="left:63px;top:38px" width="206" height="18" viewBox="0 0 206 18"><path d="M6.5 2.5Q2 2.5 2 7Q2 9.5 4.5 11.5V14.5H8.5V11.5Q11 9.5 11 7Q11 2.5 6.5 2.5Z" fill="#ffffc0" stroke="#ffff00" stroke-width="1.6"/><path d="M6.5 2.5Q2 2.5 2 7Q2 9.5 4.5 11.5V14.5H8.5V11.5Q11 9.5 11 7Q11 2.5 6.5 2.5Z" fill="none" stroke="#000" stroke-width="0.7"/><rect x="17" y="2" width="12" height="12" fill="#ffff00"/><circle cx="23" cy="8" r="4.5" fill="#ffffa0" stroke="#000" stroke-width="0.8"/><circle cx="38" cy="7" r="4.5" fill="#b0b8b8" stroke="#909090" stroke-width="0.8"/><rect x="39.5" y="8.5" width="6" height="5" fill="#fff" stroke="#909090" stroke-width="1"/><rect x="50" y="6" width="9" height="8" fill="#000"/><path d="M50 7.5H59M50 10H59M50 12.5H59" stroke="#ffff00" stroke-width="1"/><path d="M57 6V2.5Q57 1 59.5 1Q62 1 62 2.5V5" stroke="#a08000" stroke-width="1.4" fill="none"/><rect x="67.5" y="3.5" width="10" height="10" fill="#fff" stroke="#000" stroke-width="1"/><text x="83" y="13" font-family="Liberation Sans" font-size="11" fill="#000">0</text><path d="M193 7.5H200L196.5 11Z" fill="#0000ff"/></svg><div class="a" style="left:268px;top:38px;width:1px;height:18px;background:#716f64;"></div><div class="a" style="left:252px;top:55px;width:17px;height:1px;background:#716f64;"></div><div class="a" style="left:267px;top:39px;width:1px;height:16px;background:#aca899;"></div><div class="a" style="left:253px;top:54px;width:15px;height:1px;background:#aca899;"></div><div class="a" style="left:374px;top:38px;width:1px;height:18px;background:#716f64;"></div><div class="a" style="left:358px;top:55px;width:17px;height:1px;background:#716f64;"></div><div class="a" style="left:373px;top:39px;width:1px;height:16px;background:#aca899;"></div><div class="a" style="left:359px;top:54px;width:15px;height:1px;background:#aca899;"></div><div class="a" style="left:604px;top:38px;width:1px;height:18px;background:#716f64;"></div><div class="a" style="left:588px;top:55px;width:17px;height:1px;background:#716f64;"></div><div class="a" style="left:603px;top:39px;width:1px;height:16px;background:#aca899;"></div><div class="a" style="left:589px;top:54px;width:15px;height:1px;background:#aca899;"></div><svg class="a" style="left:278px;top:38px" width="96" height="18" viewBox="0 0 96 18"><rect x="5.5" y="4.5" width="10" height="10" fill="#fff" stroke="#000" stroke-width="1"/><text x="19" y="13" font-family="Liberation Sans" font-size="11" fill="#000">JakWarstwa</text><path d="M85 7.5H92L88.5 11Z" fill="#0000ff"/></svg><svg class="a" style="left:414px;top:38px" width="190" height="18" viewBox="0 0 190 18"><path d="M4 9.5H64" stroke="#000" stroke-width="1"/><text x="69" y="13" font-family="Liberation Sans" font-size="11" fill="#000">JakWarstwa</text><path d="M178 7.5H185L181.5 11Z" fill="#0000ff"/></svg><div class="a" style="left:77px;top:63px;width:935px;height:2px;background:#a9a8a3;"></div><div class="a" style="left:78px;top:64px;width:1px;height:563px;background:#a9a8a3;"></div><div class="a" style="left:79px;top:65px;width:914px;height:1px;background:#6b675d;"></div><div class="a" style="left:79px;top:65px;width:1px;height:562px;background:#6b675d;"></div><svg width="913" height="543" viewBox="80 66 913 543" style="left:80px;top:66px" shape-rendering="crispEdges"><rect x="80" y="66" width="913" height="543" fill="#000"/><path d="M316.5 190.5L316.5 199.5M311.5 199.5L321.5 199.5M325.5 181.5L352.5 181.5M352.5 181.5L379.5 163.5M371.5 162.5L371.5 126.5L385.5 126.5M389.5 121.5L655.5 121.5M389.5 130.5L655.5 130.5M371.5 126.5L674.5 126.5M389.5 131.5L389.5 144.5M384.5 144.5L395.5 144.5M655.5 131.5L655.5 144.5M651.5 144.5L661.5 144.5M660.5 126.5L674.5 126.5L674.5 162.5M371.5 199.5L371.5 244.5M371.5 244.5A9.5 9.5 0 0 1 371.5 263.5A9.5 9.5 0 0 1 371.5 282.5A9.0 9.0 0 0 1 371.5 300.5M371.5 300.5L371.5 319.5M366.5 319.5L376.5 319.5M665.5 162.5L692.5 181.5M694.5 181.5L720.5 181.5M729.5 190.5L729.5 199.5M724.5 199.5L735.5 199.5M738.5 181.5L766.5 181.5L766.5 236.5M748.5 236.5L783.5 236.5L784.5 237.5L784.5 308.5L783.5 309.5L748.5 309.5L747.5 308.5L747.5 237.5L748.5 236.5M766.5 309.5L766.5 346.5M756.5 346.5L776.5 346.5M844.5 156.5L844.5 207.5M819.5 181.5L870.5 181.5M407.5 190.5L430.5 190.5M430.5 181.5L430.5 199.5M440.5 181.5L440.5 199.5M440.5 190.5L508.5 190.5M407.5 190.5L407.5 254.5M407.5 254.5A9.5 9.5 0 0 0 407.5 273.5A9.0 9.0 0 0 0 407.5 291.5M407.5 291.5L407.5 355.5M407.5 355.5L431.5 355.5M431.5 346.5L431.5 365.5M440.5 346.5L440.5 365.5M440.5 355.5L508.5 355.5M463.5 190.5L463.5 218.5M454.5 218.5L471.5 218.5L472.5 219.5L472.5 253.5L471.5 254.5L454.5 254.5L453.5 253.5L453.5 219.5L454.5 218.5M463.5 254.5L463.5 291.5M435.5 273.5L463.5 273.5M454.5 291.5L471.5 291.5L472.5 292.5L472.5 327.5L471.5 328.5L454.5 328.5L453.5 327.5L453.5 292.5L454.5 291.5M463.5 328.5L463.5 355.5M426.5 218.5L445.5 218.5M435.5 218.5L435.5 241.5M426.5 241.5L445.5 241.5M426.5 250.5L445.5 250.5M435.5 250.5L435.5 447.5M430.5 438.5L435.5 447.5L440.5 438.5M508.5 190.5L508.5 217.5M513.5 185.5L513.5 195.5M513.5 199.5L513.5 208.5M513.5 212.5L513.5 222.5M513.5 190.5L527.5 190.5M513.5 204.5L527.5 204.5M513.5 218.5L527.5 218.5M527.5 177.5L527.5 190.5M527.5 204.5L527.5 218.5M515.5 204.5L519.5 199.5M515.5 204.5L519.5 209.5M527.5 185.5L541.5 185.5L541.5 222.5L527.5 222.5M536.5 199.5L546.5 199.5M541.5 199.5L536.5 208.5L546.5 208.5L541.5 199.5M508.5 356.5L508.5 329.5M513.5 361.5L513.5 351.5M513.5 347.5L513.5 338.5M513.5 334.5L513.5 324.5M513.5 356.5L527.5 356.5M513.5 342.5L527.5 342.5M513.5 328.5L527.5 328.5M527.5 369.5L527.5 356.5M527.5 342.5L527.5 328.5M515.5 342.5L519.5 347.5M515.5 342.5L519.5 337.5M527.5 361.5L541.5 361.5L541.5 324.5L527.5 324.5M536.5 347.5L546.5 347.5M541.5 347.5L536.5 338.5L546.5 338.5L541.5 347.5M527.5 176.5L527.5 162.5L637.5 162.5M527.5 231.5L527.5 250.5M522.5 250.5L532.5 250.5M527.5 314.5L527.5 296.5M522.5 296.5L532.5 296.5M527.5 369.5L527.5 383.5L637.5 383.5M508.5 190.5L508.5 217.5M582.5 162.5L582.5 268.5M573.5 268.5L591.5 268.5M573.5 277.5L591.5 277.5M582.5 277.5L582.5 383.5M601.5 218.5L618.5 218.5M609.5 218.5L609.5 241.5M600.5 241.5L619.5 241.5M600.5 250.5L619.5 250.5M609.5 250.5L609.5 535.5M609.5 273.5L637.5 273.5M637.5 162.5L637.5 254.5M637.5 254.5A9.5 9.5 0 0 1 637.5 273.5A9.0 9.0 0 0 1 637.5 291.5M637.5 291.5L637.5 383.5M674.5 199.5L674.5 236.5M674.5 236.5A9.0 9.0 0 0 0 674.5 254.5A9.5 9.5 0 0 0 674.5 273.5A9.0 9.0 0 0 0 674.5 291.5A9.0 9.0 0 0 0 674.5 309.5M674.5 309.5L674.5 346.5M665.5 346.5L683.5 346.5M205.5 401.5L225.5 401.5M214.5 401.5L214.5 424.5M205.5 424.5L225.5 424.5M205.5 433.5L225.5 433.5M214.5 433.5L214.5 512.5M214.5 456.5L242.5 456.5M242.5 438.5L297.5 438.5L297.5 475.5L242.5 475.5L242.5 438.5M260.5 401.5L280.5 401.5M270.5 401.5L270.5 438.5M297.5 456.5L361.5 456.5M398.5 456.5L417.5 456.5M453.5 456.5L472.5 456.5M508.5 456.5L536.5 456.5M316.5 401.5L334.5 401.5M325.5 401.5L325.5 424.5M316.5 424.5L334.5 424.5M316.5 433.5L334.5 433.5M325.5 433.5L325.5 456.5M362.5 447.5L397.5 447.5L398.5 448.5L398.5 465.5L397.5 466.5L362.5 466.5L361.5 465.5L361.5 448.5L362.5 447.5M418.5 447.5L452.5 447.5L453.5 448.5L453.5 465.5L452.5 466.5L418.5 466.5L417.5 465.5L417.5 448.5L418.5 447.5M473.5 447.5L507.5 447.5L508.5 448.5L508.5 465.5L507.5 466.5L473.5 466.5L472.5 465.5L472.5 448.5L473.5 447.5M536.5 447.5L536.5 466.5M214.5 512.5L251.5 512.5L279.5 539.5M306.5 512.5L284.5 533.5M279.5 540.5L279.5 603.5M279.5 585.5L334.5 585.5L334.5 567.5M326.5 530.5L342.5 530.5L343.5 531.5L343.5 566.5L342.5 567.5L326.5 567.5L325.5 566.5L325.5 531.5L326.5 530.5M334.5 530.5L334.5 512.5M306.5 512.5L426.5 512.5M463.5 512.5L609.5 512.5M426.5 502.5L463.5 502.5L463.5 521.5L426.5 521.5L426.5 502.5M389.5 512.5L389.5 535.5M380.5 535.5L399.5 535.5M380.5 544.5L399.5 544.5M389.5 544.5L389.5 567.5M384.5 567.5L395.5 567.5M500.5 512.5L500.5 535.5M490.5 535.5L508.5 535.5M490.5 544.5L508.5 544.5M500.5 544.5L500.5 567.5M491.5 567.5L507.5 567.5M600.5 535.5L619.5 535.5M600.5 544.5L619.5 544.5M609.5 544.5L609.5 567.5M605.5 567.5L615.5 567.5M609.5 456.5L628.5 456.5M628.5 456.5L633.6 443.6L636.8 441.4L646.9 438.5L656.9 441.4L660.1 443.6L665.2 456.5L670.3 443.6L673.5 441.4L683.6 438.5L693.6 441.4L696.8 443.6L701.9 456.5L707.0 443.6L710.2 441.4L720.2 438.5L730.3 441.4L733.5 443.6L738.6 456.5M739.5 456.5L774.5 456.5M813.5 456.5L830.5 456.5M98.5 590.5L98.5 512.5L90.5 512.5L114.5 489.5L137.5 512.5L129.5 512.5L129.5 590.5M98.5 559.5L176.5 559.5L176.5 551.5L199.5 574.5L176.5 598.5L176.5 590.5L98.5 590.5M106.5 505.5L114.5 512.5L121.5 505.5M114.5 512.5L114.5 520.5M121.5 536.5L106.5 536.5L106.5 551.5L121.5 551.5L121.5 543.5L113.5 543.5M168.5 567.5L183.5 582.5M183.5 567.5L168.5 582.5" stroke="#ffffff" stroke-width="1" fill="none"/><path d="M329.50 98.50L334.50 98.50L335.50 99.50L335.50 101.50L334.50 102.50L329.50 102.50M334.50 102.50L335.50 103.50L335.50 106.50L334.50 107.50L329.50 107.50L329.50 98.50M338.50 107.50L338.50 98.50L344.50 107.50L344.50 98.50M352.50 107.50L352.50 98.50L347.50 104.50L353.50 104.50M356.50 99.50L357.50 98.50L361.50 98.50L362.50 99.50L362.50 101.50L361.50 102.50L358.50 102.50M361.50 102.50L362.50 103.50L362.50 106.50L361.50 107.50L357.50 107.50L356.50 106.50M365.50 103.50L371.50 103.50M374.50 99.50L375.50 98.50L379.50 98.50L380.50 99.50L380.50 102.50L379.50 103.50L375.50 103.50L374.50 104.50L374.50 107.50L380.50 107.50M385.10 98.50L387.90 98.50L389.50 100.10L389.50 105.90L387.90 107.50L385.10 107.50L383.50 105.90L383.50 100.10L385.10 98.50M392.50 99.50L393.50 98.50L397.50 98.50L398.50 99.50L398.50 102.50L397.50 103.50L393.50 103.50L392.50 104.50L392.50 107.50L398.50 107.50" stroke="#00ffff" stroke-width="1" fill="none"/><path d="M619.50 98.50L624.50 98.50L625.50 99.50L625.50 101.50L624.50 102.50L619.50 102.50M624.50 102.50L625.50 103.50L625.50 106.50L624.50 107.50L619.50 107.50L619.50 98.50M628.50 107.50L628.50 98.50L634.50 107.50L634.50 98.50M642.50 107.50L642.50 98.50L637.50 104.50L643.50 104.50M646.50 99.50L647.50 98.50L651.50 98.50L652.50 99.50L652.50 101.50L651.50 102.50L648.50 102.50M651.50 102.50L652.50 103.50L652.50 106.50L651.50 107.50L647.50 107.50L646.50 106.50M655.50 103.50L661.50 103.50M664.50 99.50L665.50 98.50L669.50 98.50L670.50 99.50L670.50 102.50L669.50 103.50L665.50 103.50L664.50 104.50L664.50 107.50L670.50 107.50M675.10 98.50L677.90 98.50L679.50 100.10L679.50 105.90L677.90 107.50L675.10 107.50L673.50 105.90L673.50 100.10L675.10 98.50M682.50 99.50L683.50 98.50L687.50 98.50L688.50 99.50L688.50 102.50L687.50 103.50L683.50 103.50L682.50 104.50L682.50 107.50L688.50 107.50" stroke="#00ffff" stroke-width="1" fill="none"/><path d="M421.17 171.06L422.50 169.50L422.50 176.50M421.17 176.50L423.83 176.50M427.57 169.50L429.43 169.50L430.50 170.74L430.50 175.26L429.43 176.50L427.57 176.50L426.50 175.26L426.50 170.74L427.57 169.50M433.57 169.50L435.43 169.50L436.50 170.74L436.50 175.26L435.43 176.50L433.57 176.50L432.50 175.26L432.50 170.74L433.57 169.50M438.50 171.83L438.50 176.50M438.50 172.61L439.17 171.83L441.83 171.83L442.50 172.61L442.50 176.50" stroke="#00ffff" stroke-width="1" fill="none"/><path d="M426.17 337.06L427.50 335.50L427.50 342.50M426.17 342.50L428.83 342.50M432.57 335.50L434.43 335.50L435.50 336.74L435.50 341.26L434.43 342.50L432.57 342.50L431.50 341.26L431.50 336.74L432.57 335.50M438.57 335.50L440.43 335.50L441.50 336.74L441.50 341.26L440.43 342.50L438.57 342.50L437.50 341.26L437.50 336.74L438.57 335.50M443.50 337.83L443.50 342.50M443.50 338.61L444.17 337.83L446.83 337.83L447.50 338.61L447.50 342.50" stroke="#00ffff" stroke-width="1" fill="none"/><path d="M462.28 240.83L460.50 239.50L468.50 239.50M468.50 240.83L468.50 238.17M461.39 235.50L460.50 234.83L460.50 232.17L461.39 231.50L464.06 231.50L464.94 232.17L464.94 234.83L465.83 235.50L468.50 235.50L468.50 231.50" stroke="#00ffff" stroke-width="1" fill="none"/><path d="M462.28 314.83L460.50 313.50L468.50 313.50M468.50 314.83L468.50 312.17M461.39 309.50L460.50 308.83L460.50 306.17L461.39 305.50L464.06 305.50L464.94 306.17L464.94 308.83L465.83 309.50L468.50 309.50L468.50 305.50" stroke="#00ffff" stroke-width="1" fill="none"/><path d="M554.50 292.50L547.50 292.50L551.39 290.00L547.50 287.50L554.50 287.50M554.50 285.50L547.50 285.50L547.50 281.33L548.28 280.50L549.83 280.50L550.61 281.33L550.61 285.50M550.61 283.00L554.50 280.50M547.50 273.50L547.50 278.50L554.50 278.50M550.61 278.50L550.61 275.17M549.06 270.67L547.50 269.00L554.50 269.00M554.50 270.67L554.50 267.33M547.50 263.67L547.50 260.33L548.28 259.50L549.83 259.50L550.61 260.33L550.61 263.67L549.83 264.50L548.28 264.50L547.50 263.67M550.61 263.67L551.39 264.50L553.72 264.50L554.50 263.67L554.50 260.33L553.72 259.50L551.39 259.50L550.61 260.33M547.50 253.33L551.39 257.50L553.72 257.50L554.50 256.67L554.50 253.33L553.72 252.50L552.17 252.50L551.39 253.33L551.39 257.50" stroke="#00ffff" stroke-width="1" fill="none"/><path d="M360.39 283.50L359.50 282.67L359.50 279.33L360.39 278.50L362.17 278.50L363.06 279.33L363.06 281.83M363.06 279.33L363.94 278.50L366.61 278.50L367.50 279.33L367.50 282.67L366.61 283.50M362.17 275.50L362.17 270.50L367.50 275.50L367.50 270.50M362.17 267.50L367.50 266.83L364.39 265.00L367.50 263.17L362.17 262.50" stroke="#00ffff" stroke-width="1" fill="none"/><path d="M410.39 283.50L409.50 282.67L409.50 279.33L410.39 278.50L413.06 278.50L413.94 279.33L413.94 282.67L414.83 283.50L417.50 283.50L417.50 278.50M412.17 275.50L412.17 270.50L417.50 275.50L417.50 270.50M412.17 267.50L417.50 266.83L414.39 265.00L417.50 263.17L412.17 262.50" stroke="#00ffff" stroke-width="1" fill="none"/><path d="M627.06 268.67L625.50 267.00L632.50 267.00M632.50 268.67L632.50 265.33M627.83 262.50L627.83 257.50L632.50 262.50L632.50 257.50M627.83 255.50L632.50 254.83L629.78 253.00L632.50 251.17L627.83 250.50" stroke="#00ffff" stroke-width="1" fill="none"/><path d="M627.06 295.67L625.50 294.00L632.50 294.00M632.50 295.67L632.50 292.33M627.83 289.50L627.83 284.50L632.50 289.50L632.50 284.50M627.83 282.50L632.50 281.83L629.78 280.00L632.50 278.17L627.83 277.50" stroke="#00ffff" stroke-width="1" fill="none"/><path d="M684.50 279.33L676.50 279.33L681.83 283.50L681.83 278.50M679.17 275.50L679.17 270.50L684.50 275.50L684.50 270.50M679.17 267.50L684.50 266.83L681.39 265.00L684.50 263.17L679.17 262.50" stroke="#00ffff" stroke-width="1" fill="none"/><path d="M759.50 290.50L759.50 297.50L764.83 297.50L764.83 291.67L766.17 290.50L770.17 290.50L771.50 291.67L771.50 296.33L770.17 297.50M759.50 284.63L759.50 281.37L761.63 279.50L769.37 279.50L771.50 281.37L771.50 284.63L769.37 286.50L761.63 286.50L759.50 284.63M763.50 263.33L763.50 258.67L764.83 257.50L770.17 257.50L771.50 258.67L771.50 263.33L770.17 264.50L764.83 264.50L763.50 263.33M763.50 253.50L771.50 253.50M764.83 253.50L763.50 252.33L763.50 251.17L764.83 250.00L771.50 250.00M764.83 250.00L763.50 248.83L763.50 247.67L764.83 246.50L771.50 246.50" stroke="#00ffff" stroke-width="1" fill="none"/><path d="M247.50 452.50L253.50 452.50L253.50 453.50L248.50 461.50M257.50 452.50L261.50 452.50L262.50 453.50L262.50 455.50L261.50 456.50L257.50 456.50L256.50 455.50L256.50 453.50L257.50 452.50M257.50 456.50L256.50 457.50L256.50 460.50L257.50 461.50L261.50 461.50L262.50 460.50L262.50 457.50L261.50 456.50M265.50 452.50L265.50 461.50L271.50 461.50M276.10 452.50L278.90 452.50L280.50 454.10L280.50 459.90L278.90 461.50L276.10 461.50L274.50 459.90L274.50 454.10L276.10 452.50M288.50 452.50L283.50 457.50L283.50 460.50L284.50 461.50L288.50 461.50L289.50 460.50L289.50 458.50L288.50 457.50L283.50 457.50" stroke="#00ffff" stroke-width="1" fill="none"/><path d="M194.50 447.67L192.50 446.00L201.50 446.00M201.50 447.67L201.50 444.33M192.50 439.67L192.50 437.33L194.10 436.00L199.90 436.00L201.50 437.33L201.50 439.67L199.90 441.00L194.10 441.00L192.50 439.67M192.50 432.17L192.50 429.83L194.10 428.50L199.90 428.50L201.50 429.83L201.50 432.17L199.90 433.50L194.10 433.50L192.50 432.17M195.50 426.00L201.50 426.00M196.50 426.00L195.50 425.17L195.50 421.83L196.50 421.00L201.50 421.00" stroke="#00ffff" stroke-width="1" fill="none"/><path d="M304.50 443.67L302.50 442.00L311.50 442.00M311.50 443.67L311.50 440.33M302.50 435.67L302.50 433.33L304.10 432.00L309.90 432.00L311.50 433.33L311.50 435.67L309.90 437.00L304.10 437.00L302.50 435.67M302.50 428.17L302.50 425.83L304.10 424.50L309.90 424.50L311.50 425.83L311.50 428.17L309.90 429.50L304.10 429.50L302.50 428.17M305.50 422.00L311.50 422.00M306.50 422.00L305.50 421.17L305.50 417.83L306.50 417.00L311.50 417.00" stroke="#00ffff" stroke-width="1" fill="none"/><path d="M375.50 454.50L377.50 452.50L377.50 461.50M375.50 461.50L379.50 461.50M382.50 452.50L382.50 461.50M388.50 455.50L382.50 459.50M384.50 458.50L388.50 461.50" stroke="#00ffff" stroke-width="1" fill="none"/><path d="M433.50 452.50L427.50 452.50L427.50 456.50L432.50 456.50L433.50 457.50L433.50 460.50L432.50 461.50L428.50 461.50L427.50 460.50M436.50 452.50L436.50 461.50M442.50 455.50L436.50 459.50M438.50 458.50L442.50 461.50" stroke="#00ffff" stroke-width="1" fill="none"/><path d="M487.10 452.50L489.90 452.50L491.50 454.10L491.50 459.90L489.90 461.50L487.10 461.50L485.50 459.90L485.50 454.10L487.10 452.50" stroke="#00ffff" stroke-width="1" fill="none"/><path d="M331.50 557.67L329.50 556.00L338.50 556.00M338.50 557.67L338.50 554.33M329.50 549.67L329.50 547.33L331.10 546.00L336.90 546.00L338.50 547.33L338.50 549.67L336.90 551.00L331.10 551.00L329.50 549.67M329.50 543.50L338.50 543.50M332.50 538.50L336.50 543.50M335.50 541.83L338.50 538.50" stroke="#00ffff" stroke-width="1" fill="none"/><path d="M432.50 516.50L432.50 507.50L427.50 513.50L433.50 513.50M436.50 507.50L442.50 507.50L442.50 508.50L437.50 516.50M445.50 510.50L445.50 515.50L446.50 516.50L450.50 516.50L451.50 515.50M451.50 510.50L451.50 516.50M454.50 507.50L454.50 516.50M460.50 507.50L460.50 516.50M454.50 511.50L460.50 511.50" stroke="#00ffff" stroke-width="1" fill="none"/><path d="M478.50 552.67L476.50 551.00L485.50 551.00M485.50 552.67L485.50 549.33M476.50 544.67L476.50 542.33L478.10 541.00L483.90 541.00L485.50 542.33L485.50 544.67L483.90 546.00L478.10 546.00L476.50 544.67M476.50 537.17L476.50 534.83L478.10 533.50L483.90 533.50L485.50 534.83L485.50 537.17L483.90 538.50L478.10 538.50L476.50 537.17M479.50 531.00L485.50 531.00M480.50 531.00L479.50 530.17L479.50 526.83L480.50 526.00L485.50 526.00" stroke="#00ffff" stroke-width="1" fill="none"/><path d="M588.50 562.50L587.50 561.67L587.50 558.33L588.50 557.50L591.50 557.50L592.50 558.33L592.50 561.67L593.50 562.50L596.50 562.50L596.50 557.50M588.50 554.20L587.50 553.37L587.50 550.03L588.50 549.20L591.50 549.20L592.50 550.03L592.50 553.37L593.50 554.20L596.50 554.20L596.50 549.20M587.50 544.57L587.50 542.23L589.10 540.90L594.90 540.90L596.50 542.23L596.50 544.57L594.90 545.90L589.10 545.90L587.50 544.57M590.50 537.60L595.50 537.60L596.50 536.77L596.50 533.43L595.50 532.60M590.50 532.60L596.50 532.60M587.50 524.30L587.50 529.30L596.50 529.30M591.50 529.30L591.50 525.97" stroke="#00ffff" stroke-width="1" fill="none"/><path d="M670.50 427.50L672.50 425.50L672.50 434.50M670.50 434.50L674.50 434.50M679.10 425.50L681.90 425.50L683.50 427.10L683.50 432.90L681.90 434.50L679.10 434.50L677.50 432.90L677.50 427.10L679.10 425.50M685.50 428.50L685.50 433.50L686.50 434.50L690.50 434.50L691.50 433.50M691.50 428.50L691.50 434.50M693.50 425.50L693.50 434.50M699.50 425.50L699.50 434.50M693.50 429.50L699.50 429.50" stroke="#00ffff" stroke-width="1" fill="none"/><path d="M821.50 438.50L829.50 438.50M825.50 435.50L825.50 441.50" stroke="#ffff00" stroke-width="1" fill="none"/><path d="M834.83 434.94L837.50 432.50L837.50 443.50M834.83 443.50L840.17 443.50M843.50 433.72L844.83 432.50L850.17 432.50L851.50 433.72L851.50 437.39L850.17 438.61L844.83 438.61L843.50 439.83L843.50 443.50L851.50 443.50M853.50 432.50L857.50 443.50L861.50 432.50" stroke="#ffff00" stroke-width="1" fill="none"/><circle cx="316.5" cy="181.5" r="9" fill="none" stroke="#ffffff" stroke-width="1"/><circle cx="316.5" cy="181.5" r="2.2" fill="#ffffff" shape-rendering="auto"/><circle cx="352.5" cy="181.5" r="2.4" fill="#ffffff" shape-rendering="auto"/><rect x="369" y="160" width="5" height="5" fill="#ffffff"/><circle cx="389.5" cy="126.5" r="4.5" fill="none" stroke="#ffffff" stroke-width="1"/><circle cx="656" cy="126.5" r="5" fill="none" stroke="#ffffff" stroke-width="1"/><rect x="672" y="160" width="5" height="5" fill="#ffffff"/><rect x="369" y="197" width="5" height="5" fill="#ffffff"/><rect x="369" y="225" width="5" height="5" fill="#ffffff"/><rect x="388" y="254" width="3" height="38" fill="#ffffff"/><circle cx="692.5" cy="181.5" r="2" fill="#000" stroke="#ffffff" stroke-width="1.4" shape-rendering="auto"/><circle cx="729.5" cy="181.5" r="8.6" fill="none" stroke="#ffffff" stroke-width="1"/><path d="M729.5 179.5L731.5 181.5L729.5 183.5L727.5 181.5Z" fill="none" stroke="#ffffff" stroke-width="1"/><rect x="841.5" y="178.5" width="6" height="6" fill="none" stroke="#ffffff" stroke-width="1" style="mix-blend-mode:difference"/><rect x="844" y="181" width="1" height="1" fill="#000"/><circle cx="407.5" cy="190.5" r="2.4" fill="#ffffff" shape-rendering="auto"/><circle cx="463.5" cy="190.5" r="2.4" fill="#ffffff" shape-rendering="auto"/><circle cx="407.5" cy="245.5" r="2.4" fill="#ffffff" shape-rendering="auto"/><circle cx="407.5" cy="300.5" r="2.4" fill="#ffffff" shape-rendering="auto"/><circle cx="407.5" cy="355.5" r="2.4" fill="#ffffff" shape-rendering="auto"/><circle cx="463.5" cy="355.5" r="2.4" fill="#ffffff" shape-rendering="auto"/><circle cx="463.5" cy="273.5" r="2.4" fill="#ffffff" shape-rendering="auto"/><circle cx="435.5" cy="273.5" r="2.2" fill="#000" stroke="#ffffff" stroke-width="1.4" shape-rendering="auto"/><polygon points="527.5,177.2 545.5,183.1 549.5,187.7 554.8,204.0 550.2,219.5 545.5,224.1 527.7,231.4 510.7,224.9 506.0,220.3 499.8,204.0 506.0,187.7 509.9,183.1" fill="none" stroke="#ffffff" stroke-width="1"/><polygon points="527.5,369.5 545.5,363.6 549.5,359.0 554.8,342.7 550.2,327.2 545.5,322.6 527.7,315.3 510.7,321.8 506.0,326.4 499.8,342.7 506.0,359.0 509.9,363.6" fill="none" stroke="#ffffff" stroke-width="1"/><circle cx="582.5" cy="162.5" r="2.2" fill="#000" stroke="#ffffff" stroke-width="1.4" shape-rendering="auto"/><rect x="580" y="381" width="5" height="5" fill="#ffffff"/><rect x="490.5" y="153.5" width="74" height="239" fill="none" stroke="#00ffff" stroke-width="1"/><circle cx="609.5" cy="273.5" r="2.4" fill="#ffffff" shape-rendering="auto"/><circle cx="637.5" cy="245.5" r="2.4" fill="#ffffff" shape-rendering="auto"/><circle cx="637.5" cy="300.5" r="2.4" fill="#ffffff" shape-rendering="auto"/><rect x="653" y="236" width="6" height="74" fill="#ffffff"/><circle cx="674.5" cy="199.5" r="2.2" fill="#000" stroke="#ffffff" stroke-width="1.4" shape-rendering="auto"/><circle cx="214.5" cy="456.5" r="2.2" fill="#000" stroke="#ffffff" stroke-width="1.4" shape-rendering="auto"/><circle cx="325.5" cy="456.5" r="2.2" fill="#000" stroke="#ffffff" stroke-width="1.4" shape-rendering="auto"/><circle cx="353.5" cy="456.5" r="2.4" fill="#ffffff" shape-rendering="auto"/><circle cx="407.5" cy="456.5" r="2.4" fill="#ffffff" shape-rendering="auto"/><circle cx="463.5" cy="456.5" r="2.4" fill="#ffffff" shape-rendering="auto"/><circle cx="518.5" cy="456.5" r="2.4" fill="#ffffff" shape-rendering="auto"/><circle cx="224.5" cy="512.5" r="2.4" fill="#ffffff" shape-rendering="auto"/><path d="M280.5 538.5L284.5 530.5L289.5 535.5Z" fill="#ffffff" stroke="#ffffff" stroke-width="1"/><circle cx="279.5" cy="539.5" r="27.5" fill="none" stroke="#ffffff" stroke-width="1"/><rect x="270" y="538" width="20" height="3" fill="#ffffff"/><circle cx="279.5" cy="585.5" r="2.4" fill="#ffffff" shape-rendering="auto"/><circle cx="334.5" cy="512.5" r="2.4" fill="#ffffff" shape-rendering="auto"/><circle cx="389.5" cy="512.5" r="2.4" fill="#ffffff" shape-rendering="auto"/><circle cx="417.5" cy="512.5" r="2.2" fill="#000" stroke="#ffffff" stroke-width="1.4" shape-rendering="auto"/><circle cx="472.5" cy="512.5" r="2.2" fill="#000" stroke="#ffffff" stroke-width="1.4" shape-rendering="auto"/><circle cx="500.5" cy="512.5" r="2.4" fill="#ffffff" shape-rendering="auto"/><circle cx="609.5" cy="512.5" r="2.4" fill="#ffffff" shape-rendering="auto"/><circle cx="609.5" cy="456.5" r="2.4" fill="#ffffff" shape-rendering="auto"/><rect x="628" y="469" width="112" height="3" fill="#ffffff"/><circle cx="757.5" cy="456.5" r="2" fill="#ffffff" shape-rendering="auto"/><rect x="775" y="447.5" width="37" height="18" fill="none" stroke="#ffffff" stroke-width="3"/><circle cx="839.5" cy="456.5" r="6.8" fill="none" stroke="#ffffff" stroke-width="3.8"/><circle cx="839.5" cy="456.5" r="1" fill="#ffffff"/><path d="M86 71h1v1h-1zM86 89h1v1h-1zM86 107h1v1h-1zM86 126h1v1h-1zM86 144h1v1h-1zM86 162h1v1h-1zM86 181h1v1h-1zM86 199h1v1h-1zM86 218h1v1h-1zM86 236h1v1h-1zM86 254h1v1h-1zM86 273h1v1h-1zM86 291h1v1h-1zM86 309h1v1h-1zM86 328h1v1h-1zM86 346h1v1h-1zM86 365h1v1h-1zM86 383h1v1h-1zM86 401h1v1h-1zM86 420h1v1h-1zM86 438h1v1h-1zM86 456h1v1h-1zM86 475h1v1h-1zM86 493h1v1h-1zM86 512h1v1h-1zM86 530h1v1h-1zM86 548h1v1h-1zM86 567h1v1h-1zM86 585h1v1h-1zM86 603h1v1h-1zM104 71h1v1h-1zM104 89h1v1h-1zM104 107h1v1h-1zM104 126h1v1h-1zM104 144h1v1h-1zM104 162h1v1h-1zM104 181h1v1h-1zM104 199h1v1h-1zM104 218h1v1h-1zM104 236h1v1h-1zM104 254h1v1h-1zM104 273h1v1h-1zM104 291h1v1h-1zM104 309h1v1h-1zM104 328h1v1h-1zM104 346h1v1h-1zM104 365h1v1h-1zM104 383h1v1h-1zM104 401h1v1h-1zM104 420h1v1h-1zM104 438h1v1h-1zM104 456h1v1h-1zM104 475h1v1h-1zM104 493h1v1h-1zM104 512h1v1h-1zM104 530h1v1h-1zM104 548h1v1h-1zM104 567h1v1h-1zM104 585h1v1h-1zM104 603h1v1h-1zM123 71h1v1h-1zM123 89h1v1h-1zM123 107h1v1h-1zM123 126h1v1h-1zM123 144h1v1h-1zM123 162h1v1h-1zM123 181h1v1h-1zM123 199h1v1h-1zM123 218h1v1h-1zM123 236h1v1h-1zM123 254h1v1h-1zM123 273h1v1h-1zM123 291h1v1h-1zM123 309h1v1h-1zM123 328h1v1h-1zM123 346h1v1h-1zM123 365h1v1h-1zM123 383h1v1h-1zM123 401h1v1h-1zM123 420h1v1h-1zM123 438h1v1h-1zM123 456h1v1h-1zM123 475h1v1h-1zM123 493h1v1h-1zM123 512h1v1h-1zM123 530h1v1h-1zM123 548h1v1h-1zM123 567h1v1h-1zM123 585h1v1h-1zM123 603h1v1h-1zM141 71h1v1h-1zM141 89h1v1h-1zM141 107h1v1h-1zM141 126h1v1h-1zM141 144h1v1h-1zM141 162h1v1h-1zM141 181h1v1h-1zM141 199h1v1h-1zM141 218h1v1h-1zM141 236h1v1h-1zM141 254h1v1h-1zM141 273h1v1h-1zM141 291h1v1h-1zM141 309h1v1h-1zM141 328h1v1h-1zM141 346h1v1h-1zM141 365h1v1h-1zM141 383h1v1h-1zM141 401h1v1h-1zM141 420h1v1h-1zM141 438h1v1h-1zM141 456h1v1h-1zM141 475h1v1h-1zM141 493h1v1h-1zM141 512h1v1h-1zM141 530h1v1h-1zM141 548h1v1h-1zM141 567h1v1h-1zM141 585h1v1h-1zM141 603h1v1h-1zM159 71h1v1h-1zM159 89h1v1h-1zM159 107h1v1h-1zM159 126h1v1h-1zM159 144h1v1h-1zM159 162h1v1h-1zM159 181h1v1h-1zM159 199h1v1h-1zM159 218h1v1h-1zM159 236h1v1h-1zM159 254h1v1h-1zM159 273h1v1h-1zM159 291h1v1h-1zM159 309h1v1h-1zM159 328h1v1h-1zM159 346h1v1h-1zM159 365h1v1h-1zM159 383h1v1h-1zM159 401h1v1h-1zM159 420h1v1h-1zM159 438h1v1h-1zM159 456h1v1h-1zM159 475h1v1h-1zM159 493h1v1h-1zM159 512h1v1h-1zM159 530h1v1h-1zM159 548h1v1h-1zM159 567h1v1h-1zM159 585h1v1h-1zM159 603h1v1h-1zM178 71h1v1h-1zM178 89h1v1h-1zM178 107h1v1h-1zM178 126h1v1h-1zM178 144h1v1h-1zM178 162h1v1h-1zM178 181h1v1h-1zM178 199h1v1h-1zM178 218h1v1h-1zM178 236h1v1h-1zM178 254h1v1h-1zM178 273h1v1h-1zM178 291h1v1h-1zM178 309h1v1h-1zM178 328h1v1h-1zM178 346h1v1h-1zM178 365h1v1h-1zM178 383h1v1h-1zM178 401h1v1h-1zM178 420h1v1h-1zM178 438h1v1h-1zM178 456h1v1h-1zM178 475h1v1h-1zM178 493h1v1h-1zM178 512h1v1h-1zM178 530h1v1h-1zM178 548h1v1h-1zM178 567h1v1h-1zM178 585h1v1h-1zM178 603h1v1h-1zM196 71h1v1h-1zM196 89h1v1h-1zM196 107h1v1h-1zM196 126h1v1h-1zM196 144h1v1h-1zM196 162h1v1h-1zM196 181h1v1h-1zM196 199h1v1h-1zM196 218h1v1h-1zM196 236h1v1h-1zM196 254h1v1h-1zM196 273h1v1h-1zM196 291h1v1h-1zM196 309h1v1h-1zM196 328h1v1h-1zM196 346h1v1h-1zM196 365h1v1h-1zM196 383h1v1h-1zM196 401h1v1h-1zM196 420h1v1h-1zM196 438h1v1h-1zM196 456h1v1h-1zM196 475h1v1h-1zM196 493h1v1h-1zM196 512h1v1h-1zM196 530h1v1h-1zM196 548h1v1h-1zM196 567h1v1h-1zM196 585h1v1h-1zM196 603h1v1h-1zM214 71h1v1h-1zM214 89h1v1h-1zM214 107h1v1h-1zM214 126h1v1h-1zM214 144h1v1h-1zM214 162h1v1h-1zM214 181h1v1h-1zM214 199h1v1h-1zM214 218h1v1h-1zM214 236h1v1h-1zM214 254h1v1h-1zM214 273h1v1h-1zM214 291h1v1h-1zM214 309h1v1h-1zM214 328h1v1h-1zM214 346h1v1h-1zM214 365h1v1h-1zM214 383h1v1h-1zM214 401h1v1h-1zM214 420h1v1h-1zM214 438h1v1h-1zM214 456h1v1h-1zM214 475h1v1h-1zM214 493h1v1h-1zM214 512h1v1h-1zM214 530h1v1h-1zM214 548h1v1h-1zM214 567h1v1h-1zM214 585h1v1h-1zM214 603h1v1h-1zM233 71h1v1h-1zM233 89h1v1h-1zM233 107h1v1h-1zM233 126h1v1h-1zM233 144h1v1h-1zM233 162h1v1h-1zM233 181h1v1h-1zM233 199h1v1h-1zM233 218h1v1h-1zM233 236h1v1h-1zM233 254h1v1h-1zM233 273h1v1h-1zM233 291h1v1h-1zM233 309h1v1h-1zM233 328h1v1h-1zM233 346h1v1h-1zM233 365h1v1h-1zM233 383h1v1h-1zM233 401h1v1h-1zM233 420h1v1h-1zM233 438h1v1h-1zM233 456h1v1h-1zM233 475h1v1h-1zM233 493h1v1h-1zM233 512h1v1h-1zM233 530h1v1h-1zM233 548h1v1h-1zM233 567h1v1h-1zM233 585h1v1h-1zM233 603h1v1h-1zM251 71h1v1h-1zM251 89h1v1h-1zM251 107h1v1h-1zM251 126h1v1h-1zM251 144h1v1h-1zM251 162h1v1h-1zM251 181h1v1h-1zM251 199h1v1h-1zM251 218h1v1h-1zM251 236h1v1h-1zM251 254h1v1h-1zM251 273h1v1h-1zM251 291h1v1h-1zM251 309h1v1h-1zM251 328h1v1h-1zM251 346h1v1h-1zM251 365h1v1h-1zM251 383h1v1h-1zM251 401h1v1h-1zM251 420h1v1h-1zM251 438h1v1h-1zM251 456h1v1h-1zM251 475h1v1h-1zM251 493h1v1h-1zM251 512h1v1h-1zM251 530h1v1h-1zM251 548h1v1h-1zM251 567h1v1h-1zM251 585h1v1h-1zM251 603h1v1h-1zM270 71h1v1h-1zM270 89h1v1h-1zM270 107h1v1h-1zM270 126h1v1h-1zM270 144h1v1h-1zM270 162h1v1h-1zM270 181h1v1h-1zM270 199h1v1h-1zM270 218h1v1h-1zM270 236h1v1h-1zM270 254h1v1h-1zM270 273h1v1h-1zM270 291h1v1h-1zM270 309h1v1h-1zM270 328h1v1h-1zM270 346h1v1h-1zM270 365h1v1h-1zM270 383h1v1h-1zM270 401h1v1h-1zM270 420h1v1h-1zM270 438h1v1h-1zM270 456h1v1h-1zM270 475h1v1h-1zM270 493h1v1h-1zM270 512h1v1h-1zM270 530h1v1h-1zM270 548h1v1h-1zM270 567h1v1h-1zM270 585h1v1h-1zM270 603h1v1h-1zM288 71h1v1h-1zM288 89h1v1h-1zM288 107h1v1h-1zM288 126h1v1h-1zM288 144h1v1h-1zM288 162h1v1h-1zM288 181h1v1h-1zM288 199h1v1h-1zM288 218h1v1h-1zM288 236h1v1h-1zM288 254h1v1h-1zM288 273h1v1h-1zM288 291h1v1h-1zM288 309h1v1h-1zM288 328h1v1h-1zM288 346h1v1h-1zM288 365h1v1h-1zM288 383h1v1h-1zM288 401h1v1h-1zM288 420h1v1h-1zM288 438h1v1h-1zM288 456h1v1h-1zM288 475h1v1h-1zM288 493h1v1h-1zM288 512h1v1h-1zM288 530h1v1h-1zM288 548h1v1h-1zM288 567h1v1h-1zM288 585h1v1h-1zM288 603h1v1h-1zM306 71h1v1h-1zM306 89h1v1h-1zM306 107h1v1h-1zM306 126h1v1h-1zM306 144h1v1h-1zM306 162h1v1h-1zM306 181h1v1h-1zM306 199h1v1h-1zM306 218h1v1h-1zM306 236h1v1h-1zM306 254h1v1h-1zM306 273h1v1h-1zM306 291h1v1h-1zM306 309h1v1h-1zM306 328h1v1h-1zM306 346h1v1h-1zM306 365h1v1h-1zM306 383h1v1h-1zM306 401h1v1h-1zM306 420h1v1h-1zM306 438h1v1h-1zM306 456h1v1h-1zM306 475h1v1h-1zM306 493h1v1h-1zM306 512h1v1h-1zM306 530h1v1h-1zM306 548h1v1h-1zM306 567h1v1h-1zM306 585h1v1h-1zM306 603h1v1h-1zM325 71h1v1h-1zM325 89h1v1h-1zM325 107h1v1h-1zM325 126h1v1h-1zM325 144h1v1h-1zM325 162h1v1h-1zM325 181h1v1h-1zM325 199h1v1h-1zM325 218h1v1h-1zM325 236h1v1h-1zM325 254h1v1h-1zM325 273h1v1h-1zM325 291h1v1h-1zM325 309h1v1h-1zM325 328h1v1h-1zM325 346h1v1h-1zM325 365h1v1h-1zM325 383h1v1h-1zM325 401h1v1h-1zM325 420h1v1h-1zM325 438h1v1h-1zM325 456h1v1h-1zM325 475h1v1h-1zM325 493h1v1h-1zM325 512h1v1h-1zM325 530h1v1h-1zM325 548h1v1h-1zM325 567h1v1h-1zM325 585h1v1h-1zM325 603h1v1h-1zM343 71h1v1h-1zM343 89h1v1h-1zM343 107h1v1h-1zM343 126h1v1h-1zM343 144h1v1h-1zM343 162h1v1h-1zM343 181h1v1h-1zM343 199h1v1h-1zM343 218h1v1h-1zM343 236h1v1h-1zM343 254h1v1h-1zM343 273h1v1h-1zM343 291h1v1h-1zM343 309h1v1h-1zM343 328h1v1h-1zM343 346h1v1h-1zM343 365h1v1h-1zM343 383h1v1h-1zM343 401h1v1h-1zM343 420h1v1h-1zM343 438h1v1h-1zM343 456h1v1h-1zM343 475h1v1h-1zM343 493h1v1h-1zM343 512h1v1h-1zM343 530h1v1h-1zM343 548h1v1h-1zM343 567h1v1h-1zM343 585h1v1h-1zM343 603h1v1h-1zM361 71h1v1h-1zM361 89h1v1h-1zM361 107h1v1h-1zM361 126h1v1h-1zM361 144h1v1h-1zM361 162h1v1h-1zM361 181h1v1h-1zM361 199h1v1h-1zM361 218h1v1h-1zM361 236h1v1h-1zM361 254h1v1h-1zM361 273h1v1h-1zM361 291h1v1h-1zM361 309h1v1h-1zM361 328h1v1h-1zM361 346h1v1h-1zM361 365h1v1h-1zM361 383h1v1h-1zM361 401h1v1h-1zM361 420h1v1h-1zM361 438h1v1h-1zM361 456h1v1h-1zM361 475h1v1h-1zM361 493h1v1h-1zM361 512h1v1h-1zM361 530h1v1h-1zM361 548h1v1h-1zM361 567h1v1h-1zM361 585h1v1h-1zM361 603h1v1h-1zM380 71h1v1h-1zM380 89h1v1h-1zM380 107h1v1h-1zM380 126h1v1h-1zM380 144h1v1h-1zM380 162h1v1h-1zM380 181h1v1h-1zM380 199h1v1h-1zM380 218h1v1h-1zM380 236h1v1h-1zM380 254h1v1h-1zM380 273h1v1h-1zM380 291h1v1h-1zM380 309h1v1h-1zM380 328h1v1h-1zM380 346h1v1h-1zM380 365h1v1h-1zM380 383h1v1h-1zM380 401h1v1h-1zM380 420h1v1h-1zM380 438h1v1h-1zM380 456h1v1h-1zM380 475h1v1h-1zM380 493h1v1h-1zM380 512h1v1h-1zM380 530h1v1h-1zM380 548h1v1h-1zM380 567h1v1h-1zM380 585h1v1h-1zM380 603h1v1h-1zM398 71h1v1h-1zM398 89h1v1h-1zM398 107h1v1h-1zM398 126h1v1h-1zM398 144h1v1h-1zM398 162h1v1h-1zM398 181h1v1h-1zM398 199h1v1h-1zM398 218h1v1h-1zM398 236h1v1h-1zM398 254h1v1h-1zM398 273h1v1h-1zM398 291h1v1h-1zM398 309h1v1h-1zM398 328h1v1h-1zM398 346h1v1h-1zM398 365h1v1h-1zM398 383h1v1h-1zM398 401h1v1h-1zM398 420h1v1h-1zM398 438h1v1h-1zM398 456h1v1h-1zM398 475h1v1h-1zM398 493h1v1h-1zM398 512h1v1h-1zM398 530h1v1h-1zM398 548h1v1h-1zM398 567h1v1h-1zM398 585h1v1h-1zM398 603h1v1h-1zM417 71h1v1h-1zM417 89h1v1h-1zM417 107h1v1h-1zM417 126h1v1h-1zM417 144h1v1h-1zM417 162h1v1h-1zM417 181h1v1h-1zM417 199h1v1h-1zM417 218h1v1h-1zM417 236h1v1h-1zM417 254h1v1h-1zM417 273h1v1h-1zM417 291h1v1h-1zM417 309h1v1h-1zM417 328h1v1h-1zM417 346h1v1h-1zM417 365h1v1h-1zM417 383h1v1h-1zM417 401h1v1h-1zM417 420h1v1h-1zM417 438h1v1h-1zM417 456h1v1h-1zM417 475h1v1h-1zM417 493h1v1h-1zM417 512h1v1h-1zM417 530h1v1h-1zM417 548h1v1h-1zM417 567h1v1h-1zM417 585h1v1h-1zM417 603h1v1h-1zM435 71h1v1h-1zM435 89h1v1h-1zM435 107h1v1h-1zM435 126h1v1h-1zM435 144h1v1h-1zM435 162h1v1h-1zM435 181h1v1h-1zM435 199h1v1h-1zM435 218h1v1h-1zM435 236h1v1h-1zM435 254h1v1h-1zM435 273h1v1h-1zM435 291h1v1h-1zM435 309h1v1h-1zM435 328h1v1h-1zM435 346h1v1h-1zM435 365h1v1h-1zM435 383h1v1h-1zM435 401h1v1h-1zM435 420h1v1h-1zM435 438h1v1h-1zM435 456h1v1h-1zM435 475h1v1h-1zM435 493h1v1h-1zM435 512h1v1h-1zM435 530h1v1h-1zM435 548h1v1h-1zM435 567h1v1h-1zM435 585h1v1h-1zM435 603h1v1h-1zM453 71h1v1h-1zM453 89h1v1h-1zM453 107h1v1h-1zM453 126h1v1h-1zM453 144h1v1h-1zM453 162h1v1h-1zM453 181h1v1h-1zM453 199h1v1h-1zM453 218h1v1h-1zM453 236h1v1h-1zM453 254h1v1h-1zM453 273h1v1h-1zM453 291h1v1h-1zM453 309h1v1h-1zM453 328h1v1h-1zM453 346h1v1h-1zM453 365h1v1h-1zM453 383h1v1h-1zM453 401h1v1h-1zM453 420h1v1h-1zM453 438h1v1h-1zM453 456h1v1h-1zM453 475h1v1h-1zM453 493h1v1h-1zM453 512h1v1h-1zM453 530h1v1h-1zM453 548h1v1h-1zM453 567h1v1h-1zM453 585h1v1h-1zM453 603h1v1h-1zM472 71h1v1h-1zM472 89h1v1h-1zM472 107h1v1h-1zM472 126h1v1h-1zM472 144h1v1h-1zM472 162h1v1h-1zM472 181h1v1h-1zM472 199h1v1h-1zM472 218h1v1h-1zM472 236h1v1h-1zM472 254h1v1h-1zM472 273h1v1h-1zM472 291h1v1h-1zM472 309h1v1h-1zM472 328h1v1h-1zM472 346h1v1h-1zM472 365h1v1h-1zM472 383h1v1h-1zM472 401h1v1h-1zM472 420h1v1h-1zM472 438h1v1h-1zM472 456h1v1h-1zM472 475h1v1h-1zM472 493h1v1h-1zM472 512h1v1h-1zM472 530h1v1h-1zM472 548h1v1h-1zM472 567h1v1h-1zM472 585h1v1h-1zM472 603h1v1h-1zM490 71h1v1h-1zM490 89h1v1h-1zM490 107h1v1h-1zM490 126h1v1h-1zM490 144h1v1h-1zM490 162h1v1h-1zM490 181h1v1h-1zM490 199h1v1h-1zM490 218h1v1h-1zM490 236h1v1h-1zM490 254h1v1h-1zM490 273h1v1h-1zM490 291h1v1h-1zM490 309h1v1h-1zM490 328h1v1h-1zM490 346h1v1h-1zM490 365h1v1h-1zM490 383h1v1h-1zM490 401h1v1h-1zM490 420h1v1h-1zM490 438h1v1h-1zM490 456h1v1h-1zM490 475h1v1h-1zM490 493h1v1h-1zM490 512h1v1h-1zM490 530h1v1h-1zM490 548h1v1h-1zM490 567h1v1h-1zM490 585h1v1h-1zM490 603h1v1h-1zM508 71h1v1h-1zM508 89h1v1h-1zM508 107h1v1h-1zM508 126h1v1h-1zM508 144h1v1h-1zM508 162h1v1h-1zM508 181h1v1h-1zM508 199h1v1h-1zM508 218h1v1h-1zM508 236h1v1h-1zM508 254h1v1h-1zM508 273h1v1h-1zM508 291h1v1h-1zM508 309h1v1h-1zM508 328h1v1h-1zM508 346h1v1h-1zM508 365h1v1h-1zM508 383h1v1h-1zM508 401h1v1h-1zM508 420h1v1h-1zM508 438h1v1h-1zM508 456h1v1h-1zM508 475h1v1h-1zM508 493h1v1h-1zM508 512h1v1h-1zM508 530h1v1h-1zM508 548h1v1h-1zM508 567h1v1h-1zM508 585h1v1h-1zM508 603h1v1h-1zM527 71h1v1h-1zM527 89h1v1h-1zM527 107h1v1h-1zM527 126h1v1h-1zM527 144h1v1h-1zM527 162h1v1h-1zM527 181h1v1h-1zM527 199h1v1h-1zM527 218h1v1h-1zM527 236h1v1h-1zM527 254h1v1h-1zM527 273h1v1h-1zM527 291h1v1h-1zM527 309h1v1h-1zM527 328h1v1h-1zM527 346h1v1h-1zM527 365h1v1h-1zM527 383h1v1h-1zM527 401h1v1h-1zM527 420h1v1h-1zM527 438h1v1h-1zM527 456h1v1h-1zM527 475h1v1h-1zM527 493h1v1h-1zM527 512h1v1h-1zM527 530h1v1h-1zM527 548h1v1h-1zM527 567h1v1h-1zM527 585h1v1h-1zM527 603h1v1h-1zM545 71h1v1h-1zM545 89h1v1h-1zM545 107h1v1h-1zM545 126h1v1h-1zM545 144h1v1h-1zM545 162h1v1h-1zM545 181h1v1h-1zM545 199h1v1h-1zM545 218h1v1h-1zM545 236h1v1h-1zM545 254h1v1h-1zM545 273h1v1h-1zM545 291h1v1h-1zM545 309h1v1h-1zM545 328h1v1h-1zM545 346h1v1h-1zM545 365h1v1h-1zM545 383h1v1h-1zM545 401h1v1h-1zM545 420h1v1h-1zM545 438h1v1h-1zM545 456h1v1h-1zM545 475h1v1h-1zM545 493h1v1h-1zM545 512h1v1h-1zM545 530h1v1h-1zM545 548h1v1h-1zM545 567h1v1h-1zM545 585h1v1h-1zM545 603h1v1h-1zM564 71h1v1h-1zM564 89h1v1h-1zM564 107h1v1h-1zM564 126h1v1h-1zM564 144h1v1h-1zM564 162h1v1h-1zM564 181h1v1h-1zM564 199h1v1h-1zM564 218h1v1h-1zM564 236h1v1h-1zM564 254h1v1h-1zM564 273h1v1h-1zM564 291h1v1h-1zM564 309h1v1h-1zM564 328h1v1h-1zM564 346h1v1h-1zM564 365h1v1h-1zM564 383h1v1h-1zM564 401h1v1h-1zM564 420h1v1h-1zM564 438h1v1h-1zM564 456h1v1h-1zM564 475h1v1h-1zM564 493h1v1h-1zM564 512h1v1h-1zM564 530h1v1h-1zM564 548h1v1h-1zM564 567h1v1h-1zM564 585h1v1h-1zM564 603h1v1h-1zM582 71h1v1h-1zM582 89h1v1h-1zM582 107h1v1h-1zM582 126h1v1h-1zM582 144h1v1h-1zM582 162h1v1h-1zM582 181h1v1h-1zM582 199h1v1h-1zM582 218h1v1h-1zM582 236h1v1h-1zM582 254h1v1h-1zM582 273h1v1h-1zM582 291h1v1h-1zM582 309h1v1h-1zM582 328h1v1h-1zM582 346h1v1h-1zM582 365h1v1h-1zM582 383h1v1h-1zM582 401h1v1h-1zM582 420h1v1h-1zM582 438h1v1h-1zM582 456h1v1h-1zM582 475h1v1h-1zM582 493h1v1h-1zM582 512h1v1h-1zM582 530h1v1h-1zM582 548h1v1h-1zM582 567h1v1h-1zM582 585h1v1h-1zM582 603h1v1h-1zM600 71h1v1h-1zM600 89h1v1h-1zM600 107h1v1h-1zM600 126h1v1h-1zM600 144h1v1h-1zM600 162h1v1h-1zM600 181h1v1h-1zM600 199h1v1h-1zM600 218h1v1h-1zM600 236h1v1h-1zM600 254h1v1h-1zM600 273h1v1h-1zM600 291h1v1h-1zM600 309h1v1h-1zM600 328h1v1h-1zM600 346h1v1h-1zM600 365h1v1h-1zM600 383h1v1h-1zM600 401h1v1h-1zM600 420h1v1h-1zM600 438h1v1h-1zM600 456h1v1h-1zM600 475h1v1h-1zM600 493h1v1h-1zM600 512h1v1h-1zM600 530h1v1h-1zM600 548h1v1h-1zM600 567h1v1h-1zM600 585h1v1h-1zM600 603h1v1h-1zM619 71h1v1h-1zM619 89h1v1h-1zM619 107h1v1h-1zM619 126h1v1h-1zM619 144h1v1h-1zM619 162h1v1h-1zM619 181h1v1h-1zM619 199h1v1h-1zM619 218h1v1h-1zM619 236h1v1h-1zM619 254h1v1h-1zM619 273h1v1h-1zM619 291h1v1h-1zM619 309h1v1h-1zM619 328h1v1h-1zM619 346h1v1h-1zM619 365h1v1h-1zM619 383h1v1h-1zM619 401h1v1h-1zM619 420h1v1h-1zM619 438h1v1h-1zM619 456h1v1h-1zM619 475h1v1h-1zM619 493h1v1h-1zM619 512h1v1h-1zM619 530h1v1h-1zM619 548h1v1h-1zM619 567h1v1h-1zM619 585h1v1h-1zM619 603h1v1h-1zM637 71h1v1h-1zM637 89h1v1h-1zM637 107h1v1h-1zM637 126h1v1h-1zM637 144h1v1h-1zM637 162h1v1h-1zM637 181h1v1h-1zM637 199h1v1h-1zM637 218h1v1h-1zM637 236h1v1h-1zM637 254h1v1h-1zM637 273h1v1h-1zM637 291h1v1h-1zM637 309h1v1h-1zM637 328h1v1h-1zM637 346h1v1h-1zM637 365h1v1h-1zM637 383h1v1h-1zM637 401h1v1h-1zM637 420h1v1h-1zM637 438h1v1h-1zM637 456h1v1h-1zM637 475h1v1h-1zM637 493h1v1h-1zM637 512h1v1h-1zM637 530h1v1h-1zM637 548h1v1h-1zM637 567h1v1h-1zM637 585h1v1h-1zM637 603h1v1h-1zM655 71h1v1h-1zM655 89h1v1h-1zM655 107h1v1h-1zM655 126h1v1h-1zM655 144h1v1h-1zM655 162h1v1h-1zM655 181h1v1h-1zM655 199h1v1h-1zM655 218h1v1h-1zM655 236h1v1h-1zM655 254h1v1h-1zM655 273h1v1h-1zM655 291h1v1h-1zM655 309h1v1h-1zM655 328h1v1h-1zM655 346h1v1h-1zM655 365h1v1h-1zM655 383h1v1h-1zM655 401h1v1h-1zM655 420h1v1h-1zM655 438h1v1h-1zM655 456h1v1h-1zM655 475h1v1h-1zM655 493h1v1h-1zM655 512h1v1h-1zM655 530h1v1h-1zM655 548h1v1h-1zM655 567h1v1h-1zM655 585h1v1h-1zM655 603h1v1h-1zM674 71h1v1h-1zM674 89h1v1h-1zM674 107h1v1h-1zM674 126h1v1h-1zM674 144h1v1h-1zM674 162h1v1h-1zM674 181h1v1h-1zM674 199h1v1h-1zM674 218h1v1h-1zM674 236h1v1h-1zM674 254h1v1h-1zM674 273h1v1h-1zM674 291h1v1h-1zM674 309h1v1h-1zM674 328h1v1h-1zM674 346h1v1h-1zM674 365h1v1h-1zM674 383h1v1h-1zM674 401h1v1h-1zM674 420h1v1h-1zM674 438h1v1h-1zM674 456h1v1h-1zM674 475h1v1h-1zM674 493h1v1h-1zM674 512h1v1h-1zM674 530h1v1h-1zM674 548h1v1h-1zM674 567h1v1h-1zM674 585h1v1h-1zM674 603h1v1h-1zM692 71h1v1h-1zM692 89h1v1h-1zM692 107h1v1h-1zM692 126h1v1h-1zM692 144h1v1h-1zM692 162h1v1h-1zM692 181h1v1h-1zM692 199h1v1h-1zM692 218h1v1h-1zM692 236h1v1h-1zM692 254h1v1h-1zM692 273h1v1h-1zM692 291h1v1h-1zM692 309h1v1h-1zM692 328h1v1h-1zM692 346h1v1h-1zM692 365h1v1h-1zM692 383h1v1h-1zM692 401h1v1h-1zM692 420h1v1h-1zM692 438h1v1h-1zM692 456h1v1h-1zM692 475h1v1h-1zM692 493h1v1h-1zM692 512h1v1h-1zM692 530h1v1h-1zM692 548h1v1h-1zM692 567h1v1h-1zM692 585h1v1h-1zM692 603h1v1h-1zM711 71h1v1h-1zM711 89h1v1h-1zM711 107h1v1h-1zM711 126h1v1h-1zM711 144h1v1h-1zM711 162h1v1h-1zM711 181h1v1h-1zM711 199h1v1h-1zM711 218h1v1h-1zM711 236h1v1h-1zM711 254h1v1h-1zM711 273h1v1h-1zM711 291h1v1h-1zM711 309h1v1h-1zM711 328h1v1h-1zM711 346h1v1h-1zM711 365h1v1h-1zM711 383h1v1h-1zM711 401h1v1h-1zM711 420h1v1h-1zM711 438h1v1h-1zM711 456h1v1h-1zM711 475h1v1h-1zM711 493h1v1h-1zM711 512h1v1h-1zM711 530h1v1h-1zM711 548h1v1h-1zM711 567h1v1h-1zM711 585h1v1h-1zM711 603h1v1h-1zM729 71h1v1h-1zM729 89h1v1h-1zM729 107h1v1h-1zM729 126h1v1h-1zM729 144h1v1h-1zM729 162h1v1h-1zM729 181h1v1h-1zM729 199h1v1h-1zM729 218h1v1h-1zM729 236h1v1h-1zM729 254h1v1h-1zM729 273h1v1h-1zM729 291h1v1h-1zM729 309h1v1h-1zM729 328h1v1h-1zM729 346h1v1h-1zM729 365h1v1h-1zM729 383h1v1h-1zM729 401h1v1h-1zM729 420h1v1h-1zM729 438h1v1h-1zM729 456h1v1h-1zM729 475h1v1h-1zM729 493h1v1h-1zM729 512h1v1h-1zM729 530h1v1h-1zM729 548h1v1h-1zM729 567h1v1h-1zM729 585h1v1h-1zM729 603h1v1h-1zM747 71h1v1h-1zM747 89h1v1h-1zM747 107h1v1h-1zM747 126h1v1h-1zM747 144h1v1h-1zM747 162h1v1h-1zM747 181h1v1h-1zM747 199h1v1h-1zM747 218h1v1h-1zM747 236h1v1h-1zM747 254h1v1h-1zM747 273h1v1h-1zM747 291h1v1h-1zM747 309h1v1h-1zM747 328h1v1h-1zM747 346h1v1h-1zM747 365h1v1h-1zM747 383h1v1h-1zM747 401h1v1h-1zM747 420h1v1h-1zM747 438h1v1h-1zM747 456h1v1h-1zM747 475h1v1h-1zM747 493h1v1h-1zM747 512h1v1h-1zM747 530h1v1h-1zM747 548h1v1h-1zM747 567h1v1h-1zM747 585h1v1h-1zM747 603h1v1h-1zM766 71h1v1h-1zM766 89h1v1h-1zM766 107h1v1h-1zM766 126h1v1h-1zM766 144h1v1h-1zM766 162h1v1h-1zM766 181h1v1h-1zM766 199h1v1h-1zM766 218h1v1h-1zM766 236h1v1h-1zM766 254h1v1h-1zM766 273h1v1h-1zM766 291h1v1h-1zM766 309h1v1h-1zM766 328h1v1h-1zM766 346h1v1h-1zM766 365h1v1h-1zM766 383h1v1h-1zM766 401h1v1h-1zM766 420h1v1h-1zM766 438h1v1h-1zM766 456h1v1h-1zM766 475h1v1h-1zM766 493h1v1h-1zM766 512h1v1h-1zM766 530h1v1h-1zM766 548h1v1h-1zM766 567h1v1h-1zM766 585h1v1h-1zM766 603h1v1h-1zM784 71h1v1h-1zM784 89h1v1h-1zM784 107h1v1h-1zM784 126h1v1h-1zM784 144h1v1h-1zM784 162h1v1h-1zM784 181h1v1h-1zM784 199h1v1h-1zM784 218h1v1h-1zM784 236h1v1h-1zM784 254h1v1h-1zM784 273h1v1h-1zM784 291h1v1h-1zM784 309h1v1h-1zM784 328h1v1h-1zM784 346h1v1h-1zM784 365h1v1h-1zM784 383h1v1h-1zM784 401h1v1h-1zM784 420h1v1h-1zM784 438h1v1h-1zM784 456h1v1h-1zM784 475h1v1h-1zM784 493h1v1h-1zM784 512h1v1h-1zM784 530h1v1h-1zM784 548h1v1h-1zM784 567h1v1h-1zM784 585h1v1h-1zM784 603h1v1h-1zM802 71h1v1h-1zM802 89h1v1h-1zM802 107h1v1h-1zM802 126h1v1h-1zM802 144h1v1h-1zM802 162h1v1h-1zM802 181h1v1h-1zM802 199h1v1h-1zM802 218h1v1h-1zM802 236h1v1h-1zM802 254h1v1h-1zM802 273h1v1h-1zM802 291h1v1h-1zM802 309h1v1h-1zM802 328h1v1h-1zM802 346h1v1h-1zM802 365h1v1h-1zM802 383h1v1h-1zM802 401h1v1h-1zM802 420h1v1h-1zM802 438h1v1h-1zM802 456h1v1h-1zM802 475h1v1h-1zM802 493h1v1h-1zM802 512h1v1h-1zM802 530h1v1h-1zM802 548h1v1h-1zM802 567h1v1h-1zM802 585h1v1h-1zM802 603h1v1h-1zM821 71h1v1h-1zM821 89h1v1h-1zM821 107h1v1h-1zM821 126h1v1h-1zM821 144h1v1h-1zM821 162h1v1h-1zM821 181h1v1h-1zM821 199h1v1h-1zM821 218h1v1h-1zM821 236h1v1h-1zM821 254h1v1h-1zM821 273h1v1h-1zM821 291h1v1h-1zM821 309h1v1h-1zM821 328h1v1h-1zM821 346h1v1h-1zM821 365h1v1h-1zM821 383h1v1h-1zM821 401h1v1h-1zM821 420h1v1h-1zM821 438h1v1h-1zM821 456h1v1h-1zM821 475h1v1h-1zM821 493h1v1h-1zM821 512h1v1h-1zM821 530h1v1h-1zM821 548h1v1h-1zM821 567h1v1h-1zM821 585h1v1h-1zM821 603h1v1h-1zM839 71h1v1h-1zM839 89h1v1h-1zM839 107h1v1h-1zM839 126h1v1h-1zM839 144h1v1h-1zM839 162h1v1h-1zM839 181h1v1h-1zM839 199h1v1h-1zM839 218h1v1h-1zM839 236h1v1h-1zM839 254h1v1h-1zM839 273h1v1h-1zM839 291h1v1h-1zM839 309h1v1h-1zM839 328h1v1h-1zM839 346h1v1h-1zM839 365h1v1h-1zM839 383h1v1h-1zM839 401h1v1h-1zM839 420h1v1h-1zM839 438h1v1h-1zM839 456h1v1h-1zM839 475h1v1h-1zM839 493h1v1h-1zM839 512h1v1h-1zM839 530h1v1h-1zM839 548h1v1h-1zM839 567h1v1h-1zM839 585h1v1h-1zM839 603h1v1h-1zM858 71h1v1h-1zM858 89h1v1h-1zM858 107h1v1h-1zM858 126h1v1h-1zM858 144h1v1h-1zM858 162h1v1h-1zM858 181h1v1h-1zM858 199h1v1h-1zM858 218h1v1h-1zM858 236h1v1h-1zM858 254h1v1h-1zM858 273h1v1h-1zM858 291h1v1h-1zM858 309h1v1h-1zM858 328h1v1h-1zM858 346h1v1h-1zM858 365h1v1h-1zM858 383h1v1h-1zM858 401h1v1h-1zM858 420h1v1h-1zM858 438h1v1h-1zM858 456h1v1h-1zM858 475h1v1h-1zM858 493h1v1h-1zM858 512h1v1h-1zM858 530h1v1h-1zM858 548h1v1h-1zM858 567h1v1h-1zM858 585h1v1h-1zM858 603h1v1h-1zM876 71h1v1h-1zM876 89h1v1h-1zM876 107h1v1h-1zM876 126h1v1h-1zM876 144h1v1h-1zM876 162h1v1h-1zM876 181h1v1h-1zM876 199h1v1h-1zM876 218h1v1h-1zM876 236h1v1h-1zM876 254h1v1h-1zM876 273h1v1h-1zM876 291h1v1h-1zM876 309h1v1h-1zM876 328h1v1h-1zM876 346h1v1h-1zM876 365h1v1h-1zM876 383h1v1h-1zM876 401h1v1h-1zM876 420h1v1h-1zM876 438h1v1h-1zM876 456h1v1h-1zM876 475h1v1h-1zM876 493h1v1h-1zM876 512h1v1h-1zM876 530h1v1h-1zM876 548h1v1h-1zM876 567h1v1h-1zM876 585h1v1h-1zM876 603h1v1h-1zM894 71h1v1h-1zM894 89h1v1h-1zM894 107h1v1h-1zM894 126h1v1h-1zM894 144h1v1h-1zM894 162h1v1h-1zM894 181h1v1h-1zM894 199h1v1h-1zM894 218h1v1h-1zM894 236h1v1h-1zM894 254h1v1h-1zM894 273h1v1h-1zM894 291h1v1h-1zM894 309h1v1h-1zM894 328h1v1h-1zM894 346h1v1h-1zM894 365h1v1h-1zM894 383h1v1h-1zM894 401h1v1h-1zM894 420h1v1h-1zM894 438h1v1h-1zM894 456h1v1h-1zM894 475h1v1h-1zM894 493h1v1h-1zM894 512h1v1h-1zM894 530h1v1h-1zM894 548h1v1h-1zM894 567h1v1h-1zM894 585h1v1h-1zM894 603h1v1h-1zM913 71h1v1h-1zM913 89h1v1h-1zM913 107h1v1h-1zM913 126h1v1h-1zM913 144h1v1h-1zM913 162h1v1h-1zM913 181h1v1h-1zM913 199h1v1h-1zM913 218h1v1h-1zM913 236h1v1h-1zM913 254h1v1h-1zM913 273h1v1h-1zM913 291h1v1h-1zM913 309h1v1h-1zM913 328h1v1h-1zM913 346h1v1h-1zM913 365h1v1h-1zM913 383h1v1h-1zM913 401h1v1h-1zM913 420h1v1h-1zM913 438h1v1h-1zM913 456h1v1h-1zM913 475h1v1h-1zM913 493h1v1h-1zM913 512h1v1h-1zM913 530h1v1h-1zM913 548h1v1h-1zM913 567h1v1h-1zM913 585h1v1h-1zM913 603h1v1h-1zM931 71h1v1h-1zM931 89h1v1h-1zM931 107h1v1h-1zM931 126h1v1h-1zM931 144h1v1h-1zM931 162h1v1h-1zM931 181h1v1h-1zM931 199h1v1h-1zM931 218h1v1h-1zM931 236h1v1h-1zM931 254h1v1h-1zM931 273h1v1h-1zM931 291h1v1h-1zM931 309h1v1h-1zM931 328h1v1h-1zM931 346h1v1h-1zM931 365h1v1h-1zM931 383h1v1h-1zM931 401h1v1h-1zM931 420h1v1h-1zM931 438h1v1h-1zM931 456h1v1h-1zM931 475h1v1h-1zM931 493h1v1h-1zM931 512h1v1h-1zM931 530h1v1h-1zM931 548h1v1h-1zM931 567h1v1h-1zM931 585h1v1h-1zM931 603h1v1h-1zM949 71h1v1h-1zM949 89h1v1h-1zM949 107h1v1h-1zM949 126h1v1h-1zM949 144h1v1h-1zM949 162h1v1h-1zM949 181h1v1h-1zM949 199h1v1h-1zM949 218h1v1h-1zM949 236h1v1h-1zM949 254h1v1h-1zM949 273h1v1h-1zM949 291h1v1h-1zM949 309h1v1h-1zM949 328h1v1h-1zM949 346h1v1h-1zM949 365h1v1h-1zM949 383h1v1h-1zM949 401h1v1h-1zM949 420h1v1h-1zM949 438h1v1h-1zM949 456h1v1h-1zM949 475h1v1h-1zM949 493h1v1h-1zM949 512h1v1h-1zM949 530h1v1h-1zM949 548h1v1h-1zM949 567h1v1h-1zM949 585h1v1h-1zM949 603h1v1h-1zM968 71h1v1h-1zM968 89h1v1h-1zM968 107h1v1h-1zM968 126h1v1h-1zM968 144h1v1h-1zM968 162h1v1h-1zM968 181h1v1h-1zM968 199h1v1h-1zM968 218h1v1h-1zM968 236h1v1h-1zM968 254h1v1h-1zM968 273h1v1h-1zM968 291h1v1h-1zM968 309h1v1h-1zM968 328h1v1h-1zM968 346h1v1h-1zM968 365h1v1h-1zM968 383h1v1h-1zM968 401h1v1h-1zM968 420h1v1h-1zM968 438h1v1h-1zM968 456h1v1h-1zM968 475h1v1h-1zM968 493h1v1h-1zM968 512h1v1h-1zM968 530h1v1h-1zM968 548h1v1h-1zM968 567h1v1h-1zM968 585h1v1h-1zM968 603h1v1h-1zM986 71h1v1h-1zM986 89h1v1h-1zM986 107h1v1h-1zM986 126h1v1h-1zM986 144h1v1h-1zM986 162h1v1h-1zM986 181h1v1h-1zM986 199h1v1h-1zM986 218h1v1h-1zM986 236h1v1h-1zM986 254h1v1h-1zM986 273h1v1h-1zM986 291h1v1h-1zM986 309h1v1h-1zM986 328h1v1h-1zM986 346h1v1h-1zM986 365h1v1h-1zM986 383h1v1h-1zM986 401h1v1h-1zM986 420h1v1h-1zM986 438h1v1h-1zM986 456h1v1h-1zM986 475h1v1h-1zM986 493h1v1h-1zM986 512h1v1h-1zM986 530h1v1h-1zM986 548h1v1h-1zM986 567h1v1h-1zM986 585h1v1h-1zM986 603h1v1h-1z" fill="#ffffff" style="mix-blend-mode:difference"/></svg><div class="a" style="left:993px;top:66px;width:17px;height:543px;background:#f6f5f1;"></div><div class="a" style="left:80px;top:609px;width:913px;height:17px;background:#f6f5f1;"></div><div class="a" style="left:0px;top:628px;width:1012px;height:1px;background:#000;"></div><div class="a" style="left:0px;top:633px;width:1012px;height:1px;background:#000;"></div><div class="a" style="left:3px;top:637px;width:1005px;height:1px;background:#000;"></div><div class="a" style="left:3px;top:637px;width:1px;height:47px;background:#000;"></div><div class="a" style="left:4px;top:670px;width:1004px;height:1px;background:#a0a0a0;"></div><div class="a" style="left:5px;top:639px;font:13px/16px 'Liberation Mono',monospace;color:#000;white-space:pre">Do punktu:</div><div class="a" style="left:5px;top:654px;font:13px/16px 'Liberation Mono',monospace;color:#000;white-space:pre">Do punktu:</div><div class="a" style="left:5px;top:673px;font:13px/16px 'Liberation Mono',monospace;color:#000;white-space:pre">Polecenie:</div><div class="a" style="left:4px;top:673px;width:1px;height:11px;background:#000;"></div><svg class="a" style="left:925px;top:671px" width="87" height="13" viewBox="0 0 87 13"><path d="M9 5 L5 8.5 L9 12Z" fill="#0000ff"/><path d="M55 5 L59 8.5 L55 12Z" fill="#0000ff"/></svg><div class="a" style="left:940px;top:671px;width:1px;height:13px;background:#b0b0b0;"></div><div class="a" style="left:957px;top:671px;width:1px;height:13px;background:#7a766a;"></div><div class="a" style="left:989px;top:671px;width:1px;height:13px;background:#7a766a;"></div><div class="a" style="left:992px;top:638px;width:16px;height:32px;background:#fcfdfb;"></div><div class="a" style="left:993px;top:639px;width:14px;height:14px;border-radius:2px;background:linear-gradient(135deg,#e0e8fd 0%,#c7d6fb 45%,#b7cbf8 100%);border:1px solid #c5d4f8;box-shadow:1px 1px 0 #a9bde6"></div><svg class="a" style="left:993px;top:639px" width="14" height="14" viewBox="0 0 14 14"><path d="M3.5 9.5 L7 6 L10.5 9.5" stroke="#4d6185" stroke-width="2" fill="none"/></svg><div class="a" style="left:993px;top:655px;width:14px;height:14px;border-radius:2px;background:linear-gradient(135deg,#e0e8fd 0%,#c7d6fb 45%,#b7cbf8 100%);border:1px solid #c5d4f8;box-shadow:1px 1px 0 #a9bde6"></div><svg class="a" style="left:993px;top:655px" width="14" height="14" viewBox="0 0 14 14"><path d="M3.5 5.5 L7 9 L10.5 5.5" stroke="#4d6185" stroke-width="2" fill="none"/></svg><div class="a" style="left:995px;top:67px;width:14px;height:14px;border-radius:2px;background:linear-gradient(135deg,#e0e8fd 0%,#c7d6fb 45%,#b7cbf8 100%);border:1px solid #c5d4f8;box-shadow:1px 1px 0 #a9bde6"></div><svg class="a" style="left:995px;top:67px" width="14" height="14" viewBox="0 0 14 14"><path d="M3.5 9.5 L7 6 L10.5 9.5" stroke="#4d6185" stroke-width="2" fill="none"/></svg><div class="a" style="left:995px;top:593px;width:14px;height:14px;border-radius:2px;background:linear-gradient(135deg,#e0e8fd 0%,#c7d6fb 45%,#b7cbf8 100%);border:1px solid #c5d4f8;box-shadow:1px 1px 0 #a9bde6"></div><svg class="a" style="left:995px;top:593px" width="14" height="14" viewBox="0 0 14 14"><path d="M3.5 5.5 L7 9 L10.5 5.5" stroke="#4d6185" stroke-width="2" fill="none"/></svg><div class="a" style="left:995px;top:309px;width:14px;height:15px;border-radius:2px;background:linear-gradient(90deg,#cad9fd,#bccff9);border:1px solid #b4c7f3;box-shadow:1px 1px 0 #a9bde6"></div><svg class="a" style="left:995px;top:309px" width="14" height="15"><path d="M4 4.5h6M4 6.5h6M4 8.5h6M4 10.5h6" stroke="#8fa9e8" stroke-width="1"/></svg><div class="a" style="left:81px;top:611px;width:14px;height:14px;border-radius:2px;background:linear-gradient(135deg,#e0e8fd 0%,#c7d6fb 45%,#b7cbf8 100%);border:1px solid #c5d4f8;box-shadow:1px 1px 0 #a9bde6"></div><svg class="a" style="left:81px;top:611px" width="14" height="14" viewBox="0 0 14 14"><path d="M8.5 3.5 L5 7 L8.5 10.5" stroke="#4d6185" stroke-width="2" fill="none"/></svg><div class="a" style="left:977px;top:611px;width:14px;height:14px;border-radius:2px;background:linear-gradient(135deg,#e0e8fd 0%,#c7d6fb 45%,#b7cbf8 100%);border:1px solid #c5d4f8;box-shadow:1px 1px 0 #a9bde6"></div><svg class="a" style="left:977px;top:611px" width="14" height="14" viewBox="0 0 14 14"><path d="M5.5 3.5 L9 7 L5.5 10.5" stroke="#4d6185" stroke-width="2" fill="none"/></svg><div class="a" style="left:138px;top:611px;width:15px;height:14px;border-radius:2px;background:linear-gradient(#cad9fd,#bccff9);border:1px solid #b4c7f3;box-shadow:1px 1px 0 #a9bde6"></div><svg class="a" style="left:138px;top:611px" width="15" height="14"><path d="M4.5 4v6M6.5 4v6M8.5 4v6M10.5 4v6" stroke="#8fa9e8" stroke-width="1"/></svg><div class="a" style="left:0;top:684px;width:1012px;height:26px;background:linear-gradient(#2b5fd4 0px,#2b5fd4 1px,#3d82ec 1px,#3d82ec 3px,#2c68dc 3px,#2c68dc 4px,#3e84ee 4px,#3a7ce8 6px,#2d64d8 7px,#2459d8 9px,#2459d8 26px)"></div><div class="a" style="left:0;top:688px;width:93px;height:24px;border-radius:0 11px 0 0;background:linear-gradient(#5fae5f 0px,#48a048 2px,#3a943a 5px,#389038 12px,#358a35 22px);box-shadow:inset -2px 0 2px #2a6e2a"></div><svg class="a" style="left:4px;top:694px" width="20" height="17" viewBox="0 0 20 17"><path d="M2 2 Q5 0 9 1.5 L8 7.5 Q4.5 6 1 7.5Z" fill="#ee5a22"/><path d="M10.5 1.8 Q14 3 18.5 1.5 L17.5 8 Q13.5 9 9.5 7.8Z" fill="#7cc322"/><path d="M0.8 9 Q4.5 7.5 7.8 9 L7 15 Q3.5 13.5 0 15Z" fill="#3f7be0"/><path d="M9.3 9.3 Q13 10.5 17.3 9.5 L16.5 16 Q12.5 17 8.5 15.5Z" fill="#f2c417"/></svg><div class="a" style="left:29px;top:692px;font:italic bold 18px/22px 'Liberation Sans',sans-serif;color:#fff;text-shadow:1px 1px 1px #1d5a1d;letter-spacing:-0.6px">Start</div><div class="a" style="left:103px;top:690px;width:2px;height:2px;background:#1a3f9c;"></div><div class="a" style="left:104px;top:691px;width:1px;height:1px;background:#6fa5f5;"></div><div class="a" style="left:103px;top:693px;width:2px;height:2px;background:#1a3f9c;"></div><div class="a" style="left:104px;top:694px;width:1px;height:1px;background:#6fa5f5;"></div><div class="a" style="left:103px;top:696px;width:2px;height:2px;background:#1a3f9c;"></div><div class="a" style="left:104px;top:697px;width:1px;height:1px;background:#6fa5f5;"></div><div class="a" style="left:103px;top:699px;width:2px;height:2px;background:#1a3f9c;"></div><div class="a" style="left:104px;top:700px;width:1px;height:1px;background:#6fa5f5;"></div><div class="a" style="left:103px;top:702px;width:2px;height:2px;background:#1a3f9c;"></div><div class="a" style="left:104px;top:703px;width:1px;height:1px;background:#6fa5f5;"></div><div class="a" style="left:103px;top:705px;width:2px;height:2px;background:#1a3f9c;"></div><div class="a" style="left:104px;top:706px;width:1px;height:1px;background:#6fa5f5;"></div><div class="a" style="left:103px;top:708px;width:2px;height:2px;background:#1a3f9c;"></div><div class="a" style="left:104px;top:709px;width:1px;height:1px;background:#6fa5f5;"></div><div class="a" style="left:113px;top:692px;width:159px;height:20px;border-radius:3px 3px 0 0;background:linear-gradient(#5f9bf7 0px,#4187f5 2px,#3c81f3 5px,#3a7ef1 20px);box-shadow:inset 1px 1px 0 #6aa6fb,inset -1px 0 0 #2a62d0"></div><svg class="a" style="left:122px;top:695px" width="16" height="15" viewBox="0 0 16 15"><rect width="16" height="15" fill="#e8e8e8"/><rect x="10" y="0" width="6" height="6" fill="#cfcfcf"/><rect x="0" y="9" width="5" height="6" fill="#d0d0d0"/><path d="M7 1 L9 1 L9.5 5 L13 3.5 L12 7 L16 8 L16 10.5 L12.5 11 L13 15 L9 15 L8 12 L4 14 L4.5 10 L1 9.5 L1 7 L4.5 6.5 L2.5 3 L6.5 4.5Z" fill="#f00"/><path d="M2 3 L5 1 L4.5 4Z" fill="#222"/></svg><div class="a" style="left:142px;top:697px;font:11px/13px 'Liberation Sans',sans-serif;color:#fff">IrfanView</div><div class="a" style="left:272px;top:692px;width:159px;height:20px;border-radius:3px 3px 0 0;background:linear-gradient(#1c4fb4 0px,#1e53bb 3px,#1f55be 20px);box-shadow:inset 1px 1px 0 #173f93,inset -1px 0 0 #3a77e0"></div><svg class="a" style="left:284px;top:694px" width="16" height="16" viewBox="0 0 16 16"><rect x="0" y="1" width="14" height="14" fill="#e00000"/><rect x="0" y="1" width="14" height="14" fill="none" stroke="#400" stroke-width="1"/><text x="1" y="11" font-family="Liberation Sans" font-weight="bold" font-size="11" fill="#fff">14</text><rect x="11" y="11" width="5" height="5" fill="#fff" stroke="#000" stroke-width="1"/></svg><div class="a" style="left:303px;top:697px;font:11px/13px 'Liberation Sans',sans-serif;color:#fff;white-space:nowrap">AutoCAD - [Pa_MRF....</div><div class="a" style="left:925px;top:689px;width:87px;height:21px;background:linear-gradient(#15a0f3 0px,#0f92ec 2px,#0d8be8 21px);border-left:1px solid #0f3fa8;box-shadow:inset 1px 1px 0 #37b2f7"></div><svg class="a" style="left:916px;top:694px" width="20" height="18" viewBox="0 0 20 18"><circle cx="9.5" cy="9.5" r="8.5" fill="#4a95ec" stroke="#1b4fb0" stroke-width="1"/><circle cx="9.5" cy="7" r="6" fill="#7ab6f6" opacity="0.6"/><path d="M11.5 5 L7.5 9.5 L11.5 14" stroke="#fff" stroke-width="2.3" fill="none"/></svg><svg class="a" style="left:937px;top:695px" width="15" height="15" viewBox="0 0 15 15"><rect x="0.8" y="0.8" width="13.4" height="13.4" rx="4.5" fill="#0b8b80" stroke="#e8f4f0" stroke-width="1.6"/><text x="2.3" y="12" font-family="Liberation Sans" font-weight="bold" font-size="13" fill="#fff">e</text></svg><svg class="a" style="left:954px;top:695px" width="17" height="14" viewBox="0 0 17 14"><rect x="1" y="1" width="8" height="7" fill="#2c3a6a"/><rect x="0" y="0" width="9" height="8" fill="none" stroke="#b8c8e0" stroke-width="0.8"/><path d="M1 13 L9 13 L8 10 L2 10Z" fill="#d8d8e8"/><rect x="4" y="8" width="2" height="2" fill="#8890a8"/><path d="M11 3 Q12.5 5 11 7" stroke="#eee" stroke-width="1.2" fill="none"/><path d="M13 1.5 Q15 5 13 8.5" stroke="#eee" stroke-width="1.2" fill="none"/><path d="M15 0 Q17.5 5 15 10" stroke="#ddd" stroke-width="1.2" fill="none"/></svg><div class="a" style="left:977px;top:696px;font:11px/13px 'Liberation Sans',sans-serif;color:#fff">15:59</div></body></html>
